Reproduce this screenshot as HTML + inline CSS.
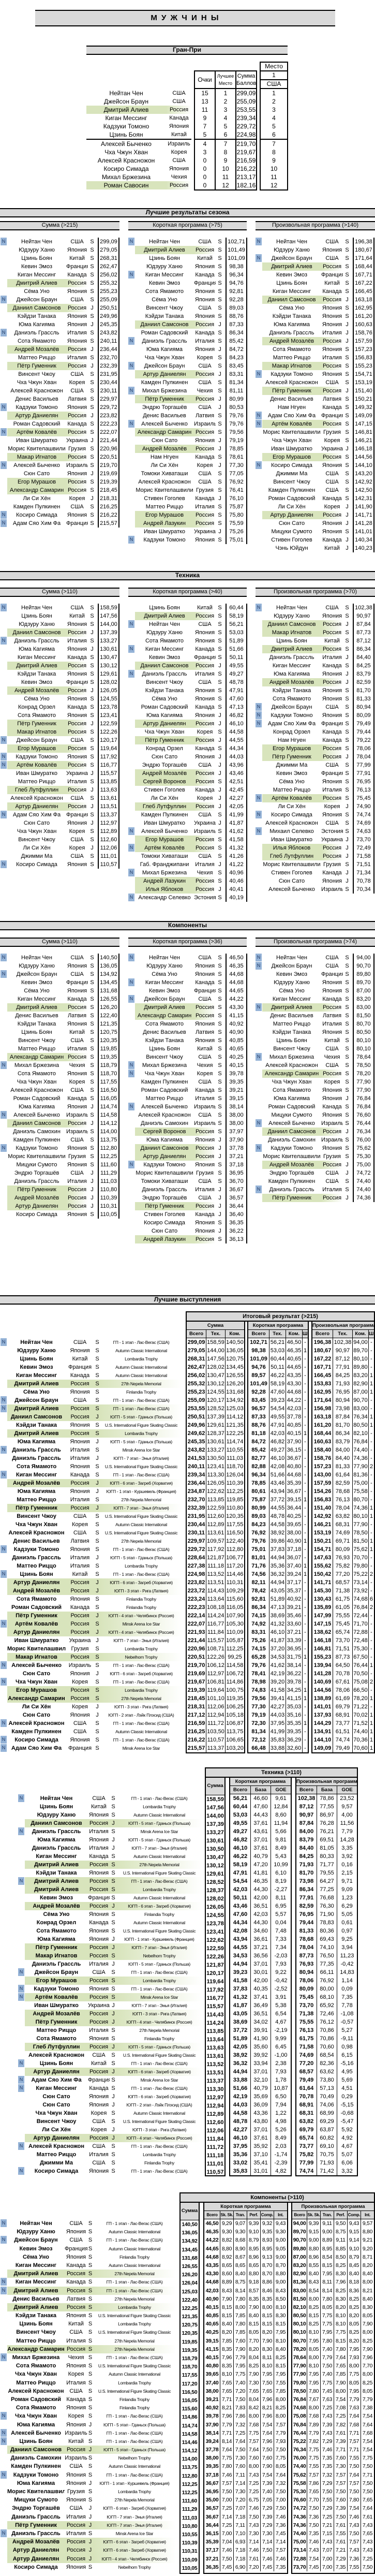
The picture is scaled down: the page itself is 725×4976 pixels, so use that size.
<!DOCTYPE html>
<html lang="ru"><head><meta charset="utf-8"><title>Мужчины</title>
<style>
*{box-sizing:border-box}
body{margin:0;width:725px;height:4976px;position:relative;font-family:"Liberation Sans","Noto Sans CJK SC",sans-serif;font-size:11px;color:#000;background:#fff;overflow:hidden}
p{margin:0}
.bar{position:absolute;background:#d9d9d9;border-top:2px solid #000;border-bottom:2px solid #000;text-align:center;font-size:11px;line-height:13px;white-space:nowrap}
.bar.big{font-size:12px;font-weight:bold}
.L{position:absolute}
.L p{display:flex;height:16px;line-height:16px;white-space:nowrap}
.L i,.L b,.L u,.L s,.L em{display:block;flex:none;font-style:normal;text-decoration:none;text-align:center;overflow:hidden}
.L i{width:12px;height:15px;margin:0 1px;font-size:9px;line-height:15px;color:#1f3864}
.L i:not(:empty){background:#95b3d7}
.L b{font-weight:normal}
.g b,.g s{background:#d8e4bc}
.g u{background:linear-gradient(90deg,#d8e4bc,#d8e4bc 40%,#fff)}
.S b{width:114px}.S u{width:42px}.S s{width:16px}
.S em{width:42px;margin-left:3px;border-left:2px solid #000;border-right:2px solid #000}
.S .g s{background:none}
.S .g u{background:linear-gradient(90deg,#d8e4bc,#fff)}
.P b,.T b,.C b{font-weight:bold}
.P b{width:113px}.P u{width:55px}.P s{width:12px}.P em{width:158px;font-size:8.5px;letter-spacing:-.3px}
.T b{width:122px}.T u{width:42px}.T s{width:14px}.T em{width:164px;font-size:8.5px;letter-spacing:-.3px}
.C b{width:111px}.C u{width:44px}.C s{width:11px}.C em{width:160px;font-size:8.5px;letter-spacing:-.3px}
.P .g u,.T .g u,.C .g u{background:#d8e4bc}
.P .g em,.T .g em,.C .g em{background:linear-gradient(90deg,#d8e4bc,#fff)}
.C p{height:16.2px}
.G{position:absolute;border:2px solid #000;background:#fff}
.G .h{display:flex;height:16px;line-height:15px;background:#d9d9d9;border-bottom:1px solid #000;font-weight:bold;font-size:9.5px;white-space:nowrap}
.G p{display:flex;height:16px;line-height:16px}
.cm p{height:16.2px}
.G c{display:block;flex:none;text-align:center;border-left:1px solid #000;overflow:hidden;white-space:nowrap}
.G c:first-child{border-left:none}
.G p c:first-child{font-weight:bold}
.pa c{width:37px}
.pb c:nth-child(1){width:40px}.pb c:nth-child(2),.pb c:nth-child(3){width:32px}.pb c:nth-child(4){width:11px}
.pc c:nth-child(1){width:39px}.pc c:nth-child(2){width:38px}.pc c:nth-child(3){width:31px}.pc c:nth-child(4){width:11px}
.ta c{width:36px}
.tb c,.tc c{width:39px}
.ca c{width:35px}
.cb c{width:26px}.cb c:first-child{width:30px}
.cc c{width:26px}.cc c:first-child{width:28px}
.cb .h c,.cc .h c{font-size:8px;letter-spacing:-.3px}
.cm p c{font-size:10.5px;letter-spacing:-.3px}
.G .h1 c{width:100%!important;font-size:9.5px!important;letter-spacing:0!important}
.bx{position:absolute;border:2px solid #000;background:#d9d9d9;text-align:center;font-weight:bold;font-size:11px;line-height:16px}
.gp{position:absolute;left:167px}
.gp p{display:flex;height:16px;line-height:16px;font-size:12px}
.gp b{display:block;width:154px;text-align:center;font-weight:normal}
.gp u{display:block;width:50px;text-align:center;text-decoration:none;font-size:11px}
.gp .g b{background:#d8e4bc}
.gp .g u{background:linear-gradient(90deg,#d8e4bc,#fff)}
.box{position:absolute;border:2px solid #000;background:#fff;font-size:12px}
.box .r{display:flex;height:16px;line-height:16px;text-align:center}
.box .r c{display:block;width:38px}
.box .r c+c{width:40px;border-left:2px solid #000}
.sep{height:2px;background:#000}
</style></head><body>

<div class="bar" style="left:68px;top:19px;width:580px;height:32px;font-size:15px;font-weight:bold;letter-spacing:2px;line-height:28px">М У Ж Ч И Н Ы</div>
<div class="bar big" style="left:167px;top:88px;width:389px;height:18px">Гран-При</div>

<div class="gp" style="top:172px">
<p><b>Нейтан Чен</b><u>США</u></p>
<p><b>Джейсон Браун</b><u>США</u></p>
<p class="g"><b>Дмитрий Алиев</b><u>Россия</u></p>
<p><b>Киган Мессинг</b><u>Канада</u></p>
<p><b>Кадзуки Томоно</b><u>Япония</u></p>
<p><b>Цзинь Боян</b><u>Китай</u></p>
</div>
<div style="position:absolute;left:167px;top:268px;width:203px;height:2px;background:#000"></div>
<div class="gp" style="top:270px">
<p><b>Алексей Быченко</b><u>Израиль</u></p>
<p><b>Чха Чжун Хван</b><u>Корея</u></p>
<p><b>Алексей Красножон</b><u>США</u></p>
<p><b>Косиро Симада</b><u>Япония</u></p>
<p><b>Михал Бржезина</b><u>Чехия</u></p>
<p class="g"><b>Роман Савосин</b><u>Россия</u></p>
</div>

<div class="box" style="left:375px;top:136px;width:122px;height:232px">
<div class="r" style="height:34px;border-bottom:2px solid #000;line-height:14px"><c style="line-height:32px">Очки</c><c style="font-size:9px;padding-top:2px">Лучшее<br>Место</c><c style="font-size:11px;padding-top:2px">Сумма<br>Баллов</c></div>
<div class="r"><c>15</c><c>1</c><c>299,09</c></div>
<div class="r"><c>13</c><c>2</c><c>255,09</c></div>
<div class="r"><c>11</c><c>3</c><c>253,55</c></div>
<div class="r"><c>9</c><c>4</c><c>239,34</c></div>
<div class="r"><c>7</c><c>5</c><c>229,72</c></div>
<div class="r"><c>5</c><c>6</c><c>224,98</c></div>
<div class="sep"></div>
<div class="r"><c>4</c><c>7</c><c>219,70</c></div>
<div class="r"><c>3</c><c>8</c><c>219,67</c></div>
<div class="r"><c>0</c><c>9</c><c>216,59</c></div>
<div class="r"><c>0</c><c>10</c><c>216,22</c></div>
<div class="r"><c>0</c><c>11</c><c>213,17</c></div>
<div class="r"><c>0</c><c>12</c><c>182,16</c></div>
</div>

<div class="box" style="left:502px;top:119px;width:55px;height:249px;text-align:center">
<div style="height:17px;border-bottom:2px solid #000;line-height:15px">Место</div>
<div style="height:17px;border-bottom:2px solid #000;line-height:15px">1</div>
<div style="height:17px;border-bottom:2px solid #000;line-height:15px">США</div>
<div style="line-height:16px">1<br>2<br>3<br>4<br>5<br>6</div>
<div class="sep"></div>
<div style="line-height:16px">7<br>8<br>9<br>10<br>11<br>12</div>
</div>

<div class="bar big" style="left:0;top:402px;width:725px;height:18px">Лучшие результаты сезона</div>
<div class="bar" style="left:0;top:427px;width:231px;height:18px">Сумма (&gt;215)</div>
<div class="bar" style="left:248px;top:427px;width:229px;height:18px">Короткая программа (&gt;75)</div>
<div class="bar" style="left:494px;top:427px;width:231px;height:18px">Произвольная программа (&gt;140)</div>

<div class="L S" style="left:0;top:459px">
<p><i>N</i><b>Нейтан Чен</b><u>США</u><s>S</s><em>299,09</em></p>
<p><i></i><b>Юдзуру Ханю</b><u>Япония</u><s>S</s><em>279,05</em></p>
<p><i></i><b>Цзинь Боян</b><u>Китай</u><s>S</s><em>268,31</em></p>
<p><i></i><b>Кевин Эмоз</b><u>Франция</u><s>S</s><em>262,47</em></p>
<p><i></i><b>Киган Мессинг</b><u>Канада</u><s>S</s><em>256,02</em></p>
<p class="g"><i></i><b>Дмитрий Алиев</b><u>Россия</u><s>S</s><em>255,32</em></p>
<p><i></i><b>Сёма Уно</b><u>Япония</u><s>S</s><em>255,23</em></p>
<p><i>N</i><b>Джейсон Браун</b><u>США</u><s>S</s><em>255,09</em></p>
<p class="g"><i></i><b>Даниил Самсонов</b><u>Россия</u><s>J</s><em>250,51</em></p>
<p><i></i><b>Кэйдзи Танака</b><u>Япония</u><s>S</s><em>249,96</em></p>
<p><i></i><b>Юма Кагияма</b><u>Япония</u><s>J</s><em>245,35</em></p>
<p><i>N</i><b>Даниэль Грассль</b><u>Италия</u><s>S</s><em>243,82</em></p>
<p><i></i><b>Сота Ямамото</b><u>Япония</u><s>S</s><em>240,11</em></p>
<p class="g"><i></i><b>Андрей Мозалёв</b><u>Россия</u><s>J</s><em>236,44</em></p>
<p><i></i><b>Маттео Риццо</b><u>Италия</u><s>S</s><em>232,70</em></p>
<p class="g"><i></i><b>Пётр Гуменник</b><u>Россия</u><s>J</s><em>232,39</em></p>
<p><i></i><b>Винсент Чжоу</b><u>США</u><s>S</s><em>231,95</em></p>
<p><i></i><b>Чха Чжун Хван</b><u>Корея</u><s>S</s><em>230,44</em></p>
<p><i></i><b>Алексей Красножон</b><u>США</u><s>S</s><em>230,11</em></p>
<p><i></i><b>Денис Васильев</b><u>Латвия</u><s>S</s><em>229,97</em></p>
<p><i>N</i><b>Кадзуки Томоно</b><u>Япония</u><s>S</s><em>229,72</em></p>
<p class="g"><i></i><b>Артур Даниелян</b><u>Россия</u><s>J</s><em>223,82</em></p>
<p><i></i><b>Роман Садовский</b><u>Канада</u><s>S</s><em>222,23</em></p>
<p class="g"><i>N</i><b>Артём Ковалёв</b><u>Россия</u><s>S</s><em>222,07</em></p>
<p><i></i><b>Иван Шмуратко</b><u>Украина</u><s>J</s><em>221,44</em></p>
<p><i></i><b>Морис Квителашвили</b><u>Грузия</u><s>S</s><em>220,96</em></p>
<p class="g"><i></i><b>Макар Игнатов</b><u>Россия</u><s>S</s><em>220,51</em></p>
<p><i>N</i><b>Алексей Быченко</b><u>Израиль</u><s>S</s><em>219,70</em></p>
<p><i></i><b>Сюн Сато</b><u>Япония</u><s>J</s><em>219,69</em></p>
<p class="g"><i></i><b>Егор Мурашов</b><u>Россия</u><s>S</s><em>219,39</em></p>
<p class="g"><i></i><b>Александр Самарин</b><u>Россия</u><s>S</s><em>218,45</em></p>
<p><i></i><b>Ли Си Хён</b><u>Корея</u><s>J</s><em>218,31</em></p>
<p><i></i><b>Камден Пулкинен</b><u>США</u><s>S</s><em>216,25</em></p>
<p><i>N</i><b>Косиро Симада</b><u>Япония</u><s>S</s><em>216,22</em></p>
<p><i>N</i><b>Адам Сяо Хим Фа</b><u>Франция</u><s>S</s><em>215,57</em></p>
</div>

<div class="L S" style="left:247px;top:459px">
<p><i>N</i><b>Нейтан Чен</b><u>США</u><s>S</s><em>102,71</em></p>
<p class="g"><i></i><b>Дмитрий Алиев</b><u>Россия</u><s>S</s><em>101,49</em></p>
<p><i></i><b>Цзинь Боян</b><u>Китай</u><s>S</s><em>101,09</em></p>
<p><i></i><b>Юдзуру Ханю</b><u>Япония</u><s>S</s><em>98,38</em></p>
<p><i>N</i><b>Киган Мессинг</b><u>Канада</u><s>S</s><em>96,34</em></p>
<p><i></i><b>Кевин Эмоз</b><u>Франция</u><s>S</s><em>94,76</em></p>
<p><i></i><b>Сота Ямамото</b><u>Япония</u><s>S</s><em>92,81</em></p>
<p><i></i><b>Сёма Уно</b><u>Япония</u><s>S</s><em>92,28</em></p>
<p><i></i><b>Винсент Чжоу</b><u>США</u><s>S</s><em>89,03</em></p>
<p><i></i><b>Кэйдзи Танака</b><u>Япония</u><s>S</s><em>88,76</em></p>
<p class="g"><i></i><b>Даниил Самсонов</b><u>Россия</u><s>J</s><em>87,33</em></p>
<p><i></i><b>Роман Садовский</b><u>Канада</u><s>S</s><em>86,34</em></p>
<p><i>N</i><b>Даниэль Грассль</b><u>Италия</u><s>S</s><em>85,42</em></p>
<p><i></i><b>Юма Кагияма</b><u>Япония</u><s>J</s><em>84,72</em></p>
<p><i></i><b>Чха Чжун Хван</b><u>Корея</u><s>S</s><em>84,23</em></p>
<p><i>N</i><b>Джейсон Браун</b><u>США</u><s>S</s><em>83,45</em></p>
<p class="g"><i></i><b>Артур Даниелян</b><u>Россия</u><s>J</s><em>83,31</em></p>
<p><i></i><b>Камден Пулкинен</b><u>США</u><s>S</s><em>81,34</em></p>
<p><i>N</i><b>Михал Бржезина</b><u>Чехия</u><s>S</s><em>81,11</em></p>
<p class="g"><i></i><b>Пётр Гуменник</b><u>Россия</u><s>J</s><em>80,99</em></p>
<p><i></i><b>Эндрю Торгашёв</b><u>США</u><s>J</s><em>80,53</em></p>
<p><i></i><b>Денис Васильев</b><u>Латвия</u><s>S</s><em>79,76</em></p>
<p><i>N</i><b>Алексей Быченко</b><u>Израиль</u><s>S</s><em>79,76</em></p>
<p class="g"><i></i><b>Александр Самарин</b><u>Россия</u><s>S</s><em>79,56</em></p>
<p><i></i><b>Сюн Сато</b><u>Япония</u><s>J</s><em>79,19</em></p>
<p class="g"><i></i><b>Андрей Мозалёв</b><u>Россия</u><s>J</s><em>78,85</em></p>
<p><i></i><b>Нам Нгуен</b><u>Канада</u><s>S</s><em>78,61</em></p>
<p><i></i><b>Ли Си Хён</b><u>Корея</u><s>J</s><em>77,30</em></p>
<p><i></i><b>Томоки Хиваташи</b><u>США</u><s>S</s><em>77,05</em></p>
<p><i></i><b>Алексей Красножон</b><u>США</u><s>S</s><em>76,92</em></p>
<p><i></i><b>Морис Квителашвили</b><u>Грузия</u><s>S</s><em>76,41</em></p>
<p><i></i><b>Стивен Гоголев</b><u>Канада</u><s>J</s><em>76,10</em></p>
<p><i></i><b>Маттео Риццо</b><u>Италия</u><s>S</s><em>75,87</em></p>
<p class="g"><i></i><b>Егор Мурашов</b><u>Россия</u><s>S</s><em>75,80</em></p>
<p class="g"><i></i><b>Андрей Лазукин</b><u>Россия</u><s>S</s><em>75,59</em></p>
<p><i></i><b>Иван Шмуратко</b><u>Украина</u><s>J</s><em>75,26</em></p>
<p><i>N</i><b>Кадзуки Томоно</b><u>Япония</u><s>S</s><em>75,01</em></p>
</div>

<div class="L S" style="left:493px;top:459px">
<p><i>N</i><b>Нейтан Чен</b><u>США</u><s>S</s><em>196,38</em></p>
<p><i></i><b>Юдзуру Ханю</b><u>Япония</u><s>S</s><em>180,67</em></p>
<p><i>N</i><b>Джейсон Браун</b><u>США</u><s>S</s><em>171,64</em></p>
<p class="g"><i></i><b>Дмитрий Алиев</b><u>Россия</u><s>S</s><em>168,44</em></p>
<p><i></i><b>Кевин Эмоз</b><u>Франция</u><s>S</s><em>167,71</em></p>
<p><i></i><b>Цзинь Боян</b><u>Китай</u><s>S</s><em>167,22</em></p>
<p><i></i><b>Киган Мессинг</b><u>Канада</u><s>S</s><em>166,45</em></p>
<p class="g"><i></i><b>Даниил Самсонов</b><u>Россия</u><s>J</s><em>163,18</em></p>
<p><i></i><b>Сёма Уно</b><u>Япония</u><s>S</s><em>162,95</em></p>
<p><i></i><b>Кэйдзи Танака</b><u>Япония</u><s>S</s><em>161,20</em></p>
<p><i></i><b>Юма Кагияма</b><u>Япония</u><s>J</s><em>160,63</em></p>
<p><i></i><b>Даниэль Грассль</b><u>Италия</u><s>J</s><em>158,76</em></p>
<p class="g"><i></i><b>Андрей Мозалёв</b><u>Россия</u><s>J</s><em>157,59</em></p>
<p><i></i><b>Сота Ямамото</b><u>Япония</u><s>S</s><em>157,23</em></p>
<p><i></i><b>Маттео Риццо</b><u>Италия</u><s>S</s><em>156,83</em></p>
<p class="g"><i></i><b>Макар Игнатов</b><u>Россия</u><s>S</s><em>155,23</em></p>
<p><i>N</i><b>Кадзуки Томоно</b><u>Япония</u><s>S</s><em>154,71</em></p>
<p><i></i><b>Алексей Красножон</b><u>США</u><s>S</s><em>153,19</em></p>
<p class="g"><i></i><b>Пётр Гуменник</b><u>Россия</u><s>J</s><em>151,40</em></p>
<p><i></i><b>Денис Васильев</b><u>Латвия</u><s>S</s><em>150,21</em></p>
<p><i></i><b>Нам Нгуен</b><u>Канада</u><s>S</s><em>149,32</em></p>
<p><i>N</i><b>Адам Сяо Хим Фа</b><u>Франция</u><s>S</s><em>149,09</em></p>
<p class="g"><i>N</i><b>Артём Ковалёв</b><u>Россия</u><s>S</s><em>147,15</em></p>
<p><i></i><b>Морис Квителашвили</b><u>Грузия</u><s>S</s><em>146,81</em></p>
<p><i></i><b>Чха Чжун Хван</b><u>Корея</u><s>S</s><em>146,21</em></p>
<p><i></i><b>Иван Шмуратко</b><u>Украина</u><s>J</s><em>146,18</em></p>
<p class="g"><i></i><b>Егор Мурашов</b><u>Россия</u><s>S</s><em>144,56</em></p>
<p><i>N</i><b>Косиро Симада</b><u>Япония</u><s>S</s><em>144,10</em></p>
<p><i></i><b>Джимми Ма</b><u>США</u><s>S</s><em>143,20</em></p>
<p><i></i><b>Винсент Чжоу</b><u>США</u><s>S</s><em>142,92</em></p>
<p><i></i><b>Камден Пулкинен</b><u>США</u><s>S</s><em>142,50</em></p>
<p><i></i><b>Роман Садовский</b><u>Канада</u><s>S</s><em>142,31</em></p>
<p><i></i><b>Ли Си Хён</b><u>Корея</u><s>J</s><em>141,90</em></p>
<p class="g"><i></i><b>Артур Даниелян</b><u>Россия</u><s>J</s><em>141,71</em></p>
<p><i></i><b>Сюн Сато</b><u>Япония</u><s>J</s><em>141,28</em></p>
<p><i></i><b>Мицуки Сумото</b><u>Япония</u><s>S</s><em>141,01</em></p>
<p><i></i><b>Стивен Гоголев</b><u>Канада</u><s>J</s><em>140,34</em></p>
<p><i></i><b>Чэнь Юйдун</b><u>Китай</u><s>J</s><em>140,23</em></p>
</div>

<div class="bar big" style="left:0;top:1103px;width:725px;height:18px">Техника</div>
<div class="bar" style="left:0;top:1135px;width:231px;height:18px">Сумма (&gt;110)</div>
<div class="bar" style="left:248px;top:1135px;width:229px;height:18px">Короткая программа (&gt;40)</div>
<div class="bar" style="left:494px;top:1135px;width:231px;height:18px">Произвольная программа (&gt;70)</div>

<div class="L S" style="left:0;top:1166px">
<p><i>N</i><b>Нейтан Чен</b><u>США</u><s>S</s><em>158,59</em></p>
<p><i></i><b>Цзинь Боян</b><u>Китай</u><s>S</s><em>147,56</em></p>
<p><i></i><b>Юдзуру Ханю</b><u>Япония</u><s>S</s><em>144,00</em></p>
<p class="g"><i></i><b>Даниил Самсонов</b><u>Россия</u><s>J</s><em>137,39</em></p>
<p><i>N</i><b>Даниэль Грассль</b><u>Италия</u><s>S</s><em>133,27</em></p>
<p><i></i><b>Юма Кагияма</b><u>Япония</u><s>J</s><em>130,61</em></p>
<p><i></i><b>Киган Мессинг</b><u>Канада</u><s>S</s><em>130,47</em></p>
<p class="g"><i></i><b>Дмитрий Алиев</b><u>Россия</u><s>S</s><em>130,12</em></p>
<p><i></i><b>Кэйдзи Танака</b><u>Япония</u><s>S</s><em>129,61</em></p>
<p><i></i><b>Кевин Эмоз</b><u>Франция</u><s>S</s><em>128,02</em></p>
<p class="g"><i></i><b>Андрей Мозалёв</b><u>Россия</u><s>J</s><em>126,05</em></p>
<p><i></i><b>Сёма Уно</b><u>Япония</u><s>S</s><em>124,55</em></p>
<p><i></i><b>Конрад Орзел</b><u>Канада</u><s>S</s><em>123,78</em></p>
<p><i></i><b>Сота Ямамото</b><u>Япония</u><s>S</s><em>123,41</em></p>
<p class="g"><i></i><b>Пётр Гуменник</b><u>Россия</u><s>J</s><em>122,59</em></p>
<p class="g"><i></i><b>Макар Игнатов</b><u>Россия</u><s>S</s><em>122,26</em></p>
<p><i>N</i><b>Джейсон Браун</b><u>США</u><s>S</s><em>120,17</em></p>
<p class="g"><i></i><b>Егор Мурашов</b><u>Россия</u><s>S</s><em>119,64</em></p>
<p><i>N</i><b>Кадзуки Томоно</b><u>Япония</u><s>S</s><em>117,92</em></p>
<p class="g"><i>N</i><b>Артём Ковалёв</b><u>Россия</u><s>S</s><em>116,77</em></p>
<p><i></i><b>Иван Шмуратко</b><u>Украина</u><s>J</s><em>115,57</em></p>
<p><i></i><b>Маттео Риццо</b><u>Италия</u><s>S</s><em>113,85</em></p>
<p class="g"><i></i><b>Глеб Лутфуллин</b><u>Россия</u><s>J</s><em>113,63</em></p>
<p><i></i><b>Алексей Красножон</b><u>США</u><s>S</s><em>113,61</em></p>
<p class="g"><i></i><b>Артур Даниелян</b><u>Россия</u><s>J</s><em>113,51</em></p>
<p><i>N</i><b>Адам Сяо Хим Фа</b><u>Франция</u><s>S</s><em>113,37</em></p>
<p><i></i><b>Сюн Сато</b><u>Япония</u><s>J</s><em>112,97</em></p>
<p><i></i><b>Чха Чжун Хван</b><u>Корея</u><s>S</s><em>112,89</em></p>
<p><i></i><b>Винсент Чжоу</b><u>США</u><s>S</s><em>112,60</em></p>
<p><i></i><b>Ли Си Хён</b><u>Корея</u><s>J</s><em>112,06</em></p>
<p><i></i><b>Джимми Ма</b><u>США</u><s>S</s><em>111,01</em></p>
<p><i>N</i><b>Косиро Симада</b><u>Япония</u><s>S</s><em>110,57</em></p>
</div>

<div class="L S" style="left:247px;top:1166px">
<p><i></i><b>Цзинь Боян</b><u>Китай</u><s>S</s><em>60,44</em></p>
<p class="g"><i></i><b>Дмитрий Алиев</b><u>Россия</u><s>S</s><em>58,19</em></p>
<p><i>N</i><b>Нейтан Чен</b><u>США</u><s>S</s><em>56,21</em></p>
<p><i></i><b>Юдзуру Ханю</b><u>Япония</u><s>S</s><em>53,03</em></p>
<p><i></i><b>Сота Ямамото</b><u>Япония</u><s>S</s><em>51,89</em></p>
<p><i>N</i><b>Киган Мессинг</b><u>Канада</u><s>S</s><em>51,66</em></p>
<p><i></i><b>Кевин Эмоз</b><u>Франция</u><s>S</s><em>50,11</em></p>
<p class="g"><i></i><b>Даниил Самсонов</b><u>Россия</u><s>J</s><em>49,55</em></p>
<p><i>N</i><b>Даниэль Грассль</b><u>Италия</u><s>S</s><em>49,27</em></p>
<p><i></i><b>Винсент Чжоу</b><u>США</u><s>S</s><em>48,78</em></p>
<p><i></i><b>Кэйдзи Танака</b><u>Япония</u><s>S</s><em>47,91</em></p>
<p><i></i><b>Сёма Уно</b><u>Япония</u><s>S</s><em>47,60</em></p>
<p><i></i><b>Роман Садовский</b><u>Канада</u><s>S</s><em>47,13</em></p>
<p><i></i><b>Юма Кагияма</b><u>Япония</u><s>J</s><em>46,82</em></p>
<p class="g"><i></i><b>Артур Даниелян</b><u>Россия</u><s>J</s><em>46,10</em></p>
<p><i></i><b>Чха Чжун Хван</b><u>Корея</u><s>S</s><em>44,58</em></p>
<p class="g"><i></i><b>Пётр Гуменник</b><u>Россия</u><s>J</s><em>44,55</em></p>
<p><i></i><b>Конрад Орзел</b><u>Канада</u><s>S</s><em>44,34</em></p>
<p><i></i><b>Сюн Сато</b><u>Япония</u><s>J</s><em>44,03</em></p>
<p><i></i><b>Эндрю Торгашёв</b><u>США</u><s>J</s><em>43,96</em></p>
<p class="g"><i></i><b>Андрей Мозалёв</b><u>Россия</u><s>J</s><em>43,46</em></p>
<p class="g"><i></i><b>Сергей Воронов</b><u>Россия</u><s>S</s><em>42,51</em></p>
<p><i></i><b>Стивен Гоголев</b><u>Канада</u><s>J</s><em>42,45</em></p>
<p><i></i><b>Ли Си Хён</b><u>Корея</u><s>J</s><em>42,27</em></p>
<p class="g"><i></i><b>Глеб Лутфуллин</b><u>Россия</u><s>J</s><em>42,05</em></p>
<p><i></i><b>Камден Пулкинен</b><u>США</u><s>S</s><em>41,99</em></p>
<p><i></i><b>Иван Шмуратко</b><u>Украина</u><s>J</s><em>41,87</em></p>
<p><i>N</i><b>Алексей Быченко</b><u>Израиль</u><s>S</s><em>41,62</em></p>
<p class="g"><i></i><b>Егор Мурашов</b><u>Россия</u><s>S</s><em>41,58</em></p>
<p class="g"><i>N</i><b>Артём Ковалёв</b><u>Россия</u><s>S</s><em>41,32</em></p>
<p><i></i><b>Томоки Хиваташи</b><u>США</u><s>S</s><em>41,26</em></p>
<p><i></i><b>Габ. Франджипани</b><u>Италия</u><s>J</s><em>41,22</em></p>
<p><i>N</i><b>Михал Бржезина</b><u>Чехия</u><s>S</s><em>40,96</em></p>
<p class="g"><i></i><b>Андрей Лазукин</b><u>Россия</u><s>S</s><em>40,46</em></p>
<p class="g"><i></i><b>Илья Яблоков</b><u>Россия</u><s>J</s><em>40,41</em></p>
<p><i>N</i><b>Александр Селевко</b><u>Эстония</u><s>S</s><em>40,19</em></p>
</div>

<div class="L S" style="left:493px;top:1166px">
<p><i>N</i><b>Нейтан Чен</b><u>США</u><s>S</s><em>102,38</em></p>
<p><i></i><b>Юдзуру Ханю</b><u>Япония</u><s>S</s><em>90,97</em></p>
<p class="g"><i></i><b>Даниил Самсонов</b><u>Россия</u><s>J</s><em>87,84</em></p>
<p class="g"><i></i><b>Макар Игнатов</b><u>Россия</u><s>S</s><em>87,73</em></p>
<p><i></i><b>Цзинь Боян</b><u>Китай</u><s>S</s><em>87,12</em></p>
<p class="g"><i></i><b>Дмитрий Алиев</b><u>Россия</u><s>S</s><em>86,34</em></p>
<p><i></i><b>Даниэль Грассль</b><u>Италия</u><s>J</s><em>84,40</em></p>
<p><i></i><b>Киган Мессинг</b><u>Канада</u><s>S</s><em>84,25</em></p>
<p><i></i><b>Юма Кагияма</b><u>Япония</u><s>J</s><em>83,79</em></p>
<p class="g"><i></i><b>Андрей Мозалёв</b><u>Россия</u><s>J</s><em>82,59</em></p>
<p><i></i><b>Кэйдзи Танака</b><u>Япония</u><s>S</s><em>81,70</em></p>
<p><i></i><b>Сота Ямамото</b><u>Япония</u><s>S</s><em>81,33</em></p>
<p><i>N</i><b>Джейсон Браун</b><u>США</u><s>S</s><em>80,94</em></p>
<p><i>N</i><b>Кадзуки Томоно</b><u>Япония</u><s>S</s><em>80,09</em></p>
<p><i>N</i><b>Адам Сяо Хим Фа</b><u>Франция</u><s>S</s><em>79,49</em></p>
<p><i></i><b>Конрад Орзел</b><u>Канада</u><s>S</s><em>79,44</em></p>
<p><i></i><b>Нам Нгуен</b><u>Канада</u><s>S</s><em>79,22</em></p>
<p class="g"><i></i><b>Егор Мурашов</b><u>Россия</u><s>S</s><em>78,06</em></p>
<p class="g"><i></i><b>Пётр Гуменник</b><u>Россия</u><s>J</s><em>78,04</em></p>
<p><i></i><b>Джимми Ма</b><u>США</u><s>S</s><em>77,99</em></p>
<p><i></i><b>Кевин Эмоз</b><u>Франция</u><s>S</s><em>77,91</em></p>
<p><i></i><b>Сёма Уно</b><u>Япония</u><s>S</s><em>76,95</em></p>
<p><i></i><b>Маттео Риццо</b><u>Италия</u><s>S</s><em>76,13</em></p>
<p class="g"><i>N</i><b>Артём Ковалёв</b><u>Россия</u><s>S</s><em>75,45</em></p>
<p><i></i><b>Ли Си Хён</b><u>Корея</u><s>J</s><em>74,90</em></p>
<p><i>N</i><b>Косиро Симада</b><u>Япония</u><s>S</s><em>74,74</em></p>
<p><i></i><b>Алексей Красножон</b><u>США</u><s>S</s><em>74,69</em></p>
<p><i>N</i><b>Михаил Селевко</b><u>Эстония</u><s>S</s><em>74,63</em></p>
<p><i></i><b>Иван Шмуратко</b><u>Украина</u><s>J</s><em>73,70</em></p>
<p class="g"><i></i><b>Илья Яблоков</b><u>Россия</u><s>J</s><em>72,49</em></p>
<p class="g"><i></i><b>Глеб Лутфуллин</b><u>Россия</u><s>J</s><em>71,58</em></p>
<p><i></i><b>Морис Квителашвили</b><u>Грузия</u><s>S</s><em>71,51</em></p>
<p><i></i><b>Стивен Гоголев</b><u>Канада</u><s>J</s><em>71,34</em></p>
<p><i></i><b>Сюн Сато</b><u>Япония</u><s>J</s><em>70,78</em></p>
<p><i></i><b>Алексей Быченко</b><u>Израиль</u><s>S</s><em>70,34</em></p>
</div>

<div class="bar big" style="left:0;top:1779px;width:725px;height:18px">Компоненты</div>
<div class="bar" style="left:0;top:1811px;width:231px;height:18px">Сумма (&gt;110)</div>
<div class="bar" style="left:248px;top:1811px;width:229px;height:18px">Короткая программа (&gt;36)</div>
<div class="bar" style="left:494px;top:1811px;width:231px;height:18px">Произвольная программа (&gt;74)</div>

<div class="L S" style="left:0;top:1842px">
<p><i>N</i><b>Нейтан Чен</b><u>США</u><s>S</s><em>140,50</em></p>
<p><i></i><b>Юдзуру Ханю</b><u>Япония</u><s>S</s><em>136,05</em></p>
<p><i>N</i><b>Джейсон Браун</b><u>США</u><s>S</s><em>134,92</em></p>
<p><i></i><b>Кевин Эмоз</b><u>Франция</u><s>S</s><em>134,45</em></p>
<p><i></i><b>Сёма Уно</b><u>Япония</u><s>S</s><em>131,68</em></p>
<p><i></i><b>Киган Мессинг</b><u>Канада</u><s>S</s><em>126,55</em></p>
<p class="g"><i></i><b>Дмитрий Алиев</b><u>Россия</u><s>S</s><em>126,20</em></p>
<p><i></i><b>Денис Васильев</b><u>Латвия</u><s>S</s><em>122,40</em></p>
<p><i></i><b>Кэйдзи Танака</b><u>Япония</u><s>S</s><em>121,35</em></p>
<p><i></i><b>Цзинь Боян</b><u>Китай</u><s>S</s><em>120,75</em></p>
<p><i></i><b>Винсент Чжоу</b><u>США</u><s>S</s><em>120,35</em></p>
<p><i></i><b>Маттео Риццо</b><u>Италия</u><s>S</s><em>119,85</em></p>
<p class="g"><i></i><b>Александр Самарин</b><u>Россия</u><s>S</s><em>119,35</em></p>
<p><i>N</i><b>Михал Бржезина</b><u>Чехия</u><s>S</s><em>118,79</em></p>
<p><i></i><b>Сота Ямамото</b><u>Япония</u><s>S</s><em>118,70</em></p>
<p><i></i><b>Чха Чжун Хван</b><u>Корея</u><s>S</s><em>117,55</em></p>
<p><i></i><b>Алексей Красножон</b><u>США</u><s>S</s><em>116,50</em></p>
<p><i></i><b>Роман Садовский</b><u>Канада</u><s>S</s><em>116,05</em></p>
<p><i></i><b>Юма Кагияма</b><u>Япония</u><s>J</s><em>114,74</em></p>
<p><i>N</i><b>Алексей Быченко</b><u>Израиль</u><s>S</s><em>114,58</em></p>
<p class="g"><i></i><b>Даниил Самсонов</b><u>Россия</u><s>J</s><em>114,12</em></p>
<p><i></i><b>Даниэль Самохин</b><u>Израиль</u><s>S</s><em>114,00</em></p>
<p><i></i><b>Камден Пулкинен</b><u>США</u><s>S</s><em>113,75</em></p>
<p><i>N</i><b>Кадзуки Томоно</b><u>Япония</u><s>S</s><em>112,80</em></p>
<p><i></i><b>Морис Квителашвили</b><u>Грузия</u><s>S</s><em>112,25</em></p>
<p><i></i><b>Мицуки Сумото</b><u>Япония</u><s>S</s><em>111,60</em></p>
<p><i></i><b>Эндрю Торгашёв</b><u>США</u><s>J</s><em>111,29</em></p>
<p><i></i><b>Даниэль Грассль</b><u>Италия</u><s>J</s><em>111,03</em></p>
<p class="g"><i></i><b>Пётр Гуменник</b><u>Россия</u><s>J</s><em>110,80</em></p>
<p class="g"><i></i><b>Андрей Мозалёв</b><u>Россия</u><s>J</s><em>110,39</em></p>
<p class="g"><i></i><b>Артур Даниелян</b><u>Россия</u><s>J</s><em>110,31</em></p>
<p><i></i><b>Косиро Симада</b><u>Япония</u><s>S</s><em>110,05</em></p>
</div>

<div class="L S" style="left:247px;top:1842px">
<p><i>N</i><b>Нейтан Чен</b><u>США</u><s>S</s><em>46,50</em></p>
<p><i></i><b>Юдзуру Ханю</b><u>Япония</u><s>S</s><em>46,35</em></p>
<p><i></i><b>Сёма Уно</b><u>Япония</u><s>S</s><em>44,68</em></p>
<p><i>N</i><b>Киган Мессинг</b><u>Канада</u><s>S</s><em>44,68</em></p>
<p><i></i><b>Кевин Эмоз</b><u>Франция</u><s>S</s><em>44,65</em></p>
<p><i>N</i><b>Джейсон Браун</b><u>США</u><s>S</s><em>44,22</em></p>
<p class="g"><i></i><b>Дмитрий Алиев</b><u>Россия</u><s>S</s><em>43,30</em></p>
<p class="g"><i></i><b>Александр Самарин</b><u>Россия</u><s>S</s><em>41,15</em></p>
<p><i></i><b>Сота Ямамото</b><u>Япония</u><s>S</s><em>40,92</em></p>
<p><i></i><b>Денис Васильев</b><u>Латвия</u><s>S</s><em>40,90</em></p>
<p><i></i><b>Кэйдзи Танака</b><u>Япония</u><s>S</s><em>40,85</em></p>
<p><i></i><b>Цзинь Боян</b><u>Китай</u><s>S</s><em>40,65</em></p>
<p><i></i><b>Винсент Чжоу</b><u>США</u><s>S</s><em>40,25</em></p>
<p><i>N</i><b>Михал Бржезина</b><u>Чехия</u><s>S</s><em>40,15</em></p>
<p><i>N</i><b>Чха Чжун Хван</b><u>Корея</u><s>S</s><em>39,78</em></p>
<p><i></i><b>Камден Пулкинен</b><u>США</u><s>S</s><em>39,35</em></p>
<p><i></i><b>Роман Садовский</b><u>Канада</u><s>S</s><em>39,21</em></p>
<p><i></i><b>Маттео Риццо</b><u>Италия</u><s>S</s><em>39,15</em></p>
<p><i>N</i><b>Алексей Быченко</b><u>Израиль</u><s>S</s><em>38,14</em></p>
<p><i></i><b>Алексей Красножон</b><u>США</u><s>S</s><em>38,00</em></p>
<p><i></i><b>Даниэль Самохин</b><u>Израиль</u><s>S</s><em>38,00</em></p>
<p class="g"><i></i><b>Сергей Воронов</b><u>Россия</u><s>S</s><em>37,97</em></p>
<p><i></i><b>Юма Кагияма</b><u>Япония</u><s>J</s><em>37,90</em></p>
<p class="g"><i></i><b>Даниил Самсонов</b><u>Россия</u><s>J</s><em>37,78</em></p>
<p class="g"><i></i><b>Артур Даниелян</b><u>Россия</u><s>J</s><em>37,21</em></p>
<p><i>N</i><b>Кадзуки Томоно</b><u>Япония</u><s>S</s><em>37,18</em></p>
<p><i></i><b>Морис Квителашвили</b><u>Грузия</u><s>S</s><em>36,95</em></p>
<p><i></i><b>Томоки Хиваташи</b><u>США</u><s>S</s><em>36,70</em></p>
<p><i></i><b>Даниэль Грассль</b><u>Италия</u><s>J</s><em>36,67</em></p>
<p><i></i><b>Эндрю Торгашёв</b><u>США</u><s>J</s><em>36,57</em></p>
<p class="g"><i></i><b>Пётр Гуменник</b><u>Россия</u><s>J</s><em>36,44</em></p>
<p><i></i><b>Стивен Гоголев</b><u>Канада</u><s>J</s><em>36,40</em></p>
<p><i></i><b>Косиро Симада</b><u>Япония</u><s>S</s><em>36,35</em></p>
<p><i></i><b>Сюн Сато</b><u>Япония</u><s>J</s><em>36,22</em></p>
<p class="g"><i></i><b>Андрей Лазукин</b><u>Россия</u><s>S</s><em>36,13</em></p>
</div>

<div class="L S" style="left:493px;top:1842px">
<p><i>N</i><b>Нейтан Чен</b><u>США</u><s>S</s><em>94,00</em></p>
<p><i>N</i><b>Джейсон Браун</b><u>США</u><s>S</s><em>90,70</em></p>
<p><i></i><b>Кевин Эмоз</b><u>Франция</u><s>S</s><em>89,80</em></p>
<p><i></i><b>Юдзуру Ханю</b><u>Япония</u><s>S</s><em>89,70</em></p>
<p><i></i><b>Сёма Уно</b><u>Япония</u><s>S</s><em>87,00</em></p>
<p><i></i><b>Киган Мессинг</b><u>Канада</u><s>S</s><em>83,20</em></p>
<p class="g"><i>N</i><b>Дмитрий Алиев</b><u>Россия</u><s>S</s><em>83,00</em></p>
<p><i></i><b>Денис Васильев</b><u>Латвия</u><s>S</s><em>81,50</em></p>
<p><i></i><b>Маттео Риццо</b><u>Италия</u><s>S</s><em>80,70</em></p>
<p><i></i><b>Кэйдзи Танака</b><u>Япония</u><s>S</s><em>80,50</em></p>
<p><i></i><b>Цзинь Боян</b><u>Китай</u><s>S</s><em>80,10</em></p>
<p><i></i><b>Винсент Чжоу</b><u>США</u><s>S</s><em>80,10</em></p>
<p><i>N</i><b>Михал Бржезина</b><u>Чехия</u><s>S</s><em>78,64</em></p>
<p><i></i><b>Алексей Красножон</b><u>США</u><s>S</s><em>78,50</em></p>
<p class="g"><i></i><b>Александр Самарин</b><u>Россия</u><s>S</s><em>78,20</em></p>
<p><i></i><b>Чха Чжун Хван</b><u>Корея</u><s>S</s><em>77,90</em></p>
<p><i></i><b>Сота Ямамото</b><u>Япония</u><s>S</s><em>77,90</em></p>
<p><i></i><b>Юма Кагияма</b><u>Япония</u><s>J</s><em>76,84</em></p>
<p><i></i><b>Роман Садовский</b><u>Канада</u><s>S</s><em>76,84</em></p>
<p><i></i><b>Мицуки Сумото</b><u>Япония</u><s>S</s><em>76,60</em></p>
<p><i>N</i><b>Алексей Быченко</b><u>Израиль</u><s>S</s><em>76,44</em></p>
<p class="g"><i></i><b>Даниил Самсонов</b><u>Россия</u><s>J</s><em>76,34</em></p>
<p><i></i><b>Даниэль Самохин</b><u>Израиль</u><s>S</s><em>76,00</em></p>
<p><i>N</i><b>Кадзуки Томоно</b><u>Япония</u><s>S</s><em>75,62</em></p>
<p><i></i><b>Морис Квителашвили</b><u>Грузия</u><s>S</s><em>75,30</em></p>
<p class="g"><i></i><b>Андрей Мозалёв</b><u>Россия</u><s>J</s><em>75,00</em></p>
<p><i></i><b>Эндрю Торгашёв</b><u>США</u><s>J</s><em>74,72</em></p>
<p><i></i><b>Камден Пулкинен</b><u>США</u><s>S</s><em>74,40</em></p>
<p><i>N</i><b>Даниэль Грассль</b><u>Италия</u><s>S</s><em>74,40</em></p>
<p class="g"><i></i><b>Пётр Гуменник</b><u>Россия</u><s>J</s><em>74,36</em></p>
</div>

<div class="bar big" style="left:0;top:2502px;width:725px;height:18px">Лучшие выступления</div>
<div class="bx" style="left:359px;top:2533px;width:366px;height:20px">Итоговый результат (&gt;215)</div>

<div class="L P" style="left:0;top:2585px">
<p><i>N</i><b>Нейтан Чен</b><u>США</u><s>S</s><em>ГП - 1 этап - Лас-Вегас (США)</em></p>
<p><i></i><b>Юдзуру Ханю</b><u>Япония</u><s>S</s><em>Autumn Classic International</em></p>
<p><i></i><b>Цзинь Боян</b><u>Китай</u><s>S</s><em>Lombardia Trophy</em></p>
<p><i></i><b>Кевин Эмоз</b><u>Франция</u><s>S</s><em>Autumn Classic International</em></p>
<p><i></i><b>Киган Мессинг</b><u>Канада</u><s>S</s><em>Autumn Classic International</em></p>
<p class="g"><i></i><b>Дмитрий Алиев</b><u>Россия</u><s>S</s><em>27th Nepela Memorial</em></p>
<p><i></i><b>Сёма Уно</b><u>Япония</u><s>S</s><em>Finlandia Trophy</em></p>
<p><i>N</i><b>Джейсон Браун</b><u>США</u><s>S</s><em>ГП - 1 этап - Лас-Вегас (США)</em></p>
<p class="g"><i>N</i><b>Дмитрий Алиев</b><u>Россия</u><s>S</s><em>ГП - 1 этап - Лас-Вегас (США)</em></p>
<p class="g"><i></i><b>Даниил Самсонов</b><u>Россия</u><s>J</s><em>ЮГП - 5 этап - Гданьск (Польша)</em></p>
<p><i></i><b>Кэйдзи Танака</b><u>Япония</u><s>S</s><em>U.S. International Figure Skating Classic</em></p>
<p class="g"><i></i><b>Дмитрий Алиев</b><u>Россия</u><s>S</s><em>Lombardia Trophy</em></p>
<p><i></i><b>Юма Кагияма</b><u>Япония</u><s>J</s><em>ЮГП - 5 этап - Гданьск (Польша)</em></p>
<p><i>N</i><b>Даниэль Грассль</b><u>Италия</u><s>S</s><em>Minsk Arena Ice Star</em></p>
<p><i></i><b>Даниэль Грассль</b><u>Италия</u><s>J</s><em>ЮГП - 7 этап - Энья (Италия)</em></p>
<p><i></i><b>Сота Ямамото</b><u>Япония</u><s>S</s><em>U.S. International Figure Skating Classic</em></p>
<p><i>N</i><b>Киган Мессинг</b><u>Канада</u><s>S</s><em>ГП - 1 этап - Лас-Вегас (США)</em></p>
<p class="g"><i></i><b>Андрей Мозалёв</b><u>Россия</u><s>J</s><em>ЮГП - 6 этап - Загреб (Хорватия)</em></p>
<p><i></i><b>Юма Кагияма</b><u>Япония</u><s>J</s><em>ЮГП - 1 этап - Куршевель (Франция)</em></p>
<p><i></i><b>Маттео Риццо</b><u>Италия</u><s>S</s><em>27th Nepela Memorial</em></p>
<p class="g"><i></i><b>Пётр Гуменник</b><u>Россия</u><s>J</s><em>ЮГП - 7 этап - Энья (Италия)</em></p>
<p><i></i><b>Винсент Чжоу</b><u>США</u><s>S</s><em>U.S. International Figure Skating Classic</em></p>
<p><i></i><b>Чха Чжун Хван</b><u>Корея</u><s>S</s><em>Autumn Classic International</em></p>
<p><i></i><b>Алексей Красножон</b><u>США</u><s>S</s><em>U.S. International Figure Skating Classic</em></p>
<p><i></i><b>Денис Васильев</b><u>Латвия</u><s>S</s><em>27th Nepela Memorial</em></p>
<p><i>N</i><b>Кадзуки Томоно</b><u>Япония</u><s>S</s><em>ГП - 1 этап - Лас-Вегас (США)</em></p>
<p><i></i><b>Даниэль Грассль</b><u>Италия</u><s>J</s><em>ЮГП - 5 этап - Гданьск (Польша)</em></p>
<p><i></i><b>Маттео Риццо</b><u>Италия</u><s>S</s><em>Lombardia Trophy</em></p>
<p><i>N</i><b>Цзинь Боян</b><u>Китай</u><s>S</s><em>ГП - 1 этап - Лас-Вегас (США)</em></p>
<p class="g"><i></i><b>Артур Даниелян</b><u>Россия</u><s>J</s><em>ЮГП - 6 этап - Загреб (Хорватия)</em></p>
<p class="g"><i></i><b>Андрей Мозалёв</b><u>Россия</u><s>J</s><em>ЮГП - 3 этап - Рига (Латвия)</em></p>
<p><i></i><b>Сота Ямамото</b><u>Япония</u><s>S</s><em>Finlandia Trophy</em></p>
<p><i></i><b>Роман Садовский</b><u>Канада</u><s>S</s><em>Finlandia Trophy</em></p>
<p class="g"><i></i><b>Пётр Гуменник</b><u>Россия</u><s>J</s><em>ЮГП - 4 этап - Челябинск (Россия)</em></p>
<p class="g"><i>N</i><b>Артём Ковалёв</b><u>Россия</u><s>S</s><em>Minsk Arena Ice Star</em></p>
<p class="g"><i></i><b>Артур Даниелян</b><u>Россия</u><s>J</s><em>ЮГП - 4 этап - Челябинск (Россия)</em></p>
<p><i></i><b>Иван Шмуратко</b><u>Украина</u><s>J</s><em>ЮГП - 7 этап - Энья (Италия)</em></p>
<p><i></i><b>Морис Квителашвили</b><u>Грузия</u><s>S</s><em>Lombardia Trophy</em></p>
<p class="g"><i></i><b>Макар Игнатов</b><u>Россия</u><s>S</s><em>Nebelhorn Trophy</em></p>
<p><i>N</i><b>Алексей Быченко</b><u>Израиль</u><s>S</s><em>ГП - 1 этап - Лас-Вегас (США)</em></p>
<p><i></i><b>Сюн Сато</b><u>Япония</u><s>J</s><em>ЮГП - 6 этап - Загреб (Хорватия)</em></p>
<p><i>N</i><b>Чха Чжун Хван</b><u>Корея</u><s>S</s><em>ГП - 1 этап - Лас-Вегас (США)</em></p>
<p class="g"><i></i><b>Егор Мурашов</b><u>Россия</u><s>S</s><em>Lombardia Trophy</em></p>
<p class="g"><i></i><b>Александр Самарин</b><u>Россия</u><s>S</s><em>27th Nepela Memorial</em></p>
<p><i></i><b>Ли Си Хён</b><u>Корея</u><s>J</s><em>ЮГП - 3 этап - Рига (Латвия)</em></p>
<p><i></i><b>Сюн Сато</b><u>Япония</u><s>J</s><em>ЮГП - 2 этап - Лэйк Плэсид (США)</em></p>
<p><i>N</i><b>Алексей Красножон</b><u>США</u><s>S</s><em>ГП - 1 этап - Лас-Вегас (США)</em></p>
<p><i></i><b>Камден Пулкинен</b><u>США</u><s>S</s><em>Autumn Classic International</em></p>
<p><i>N</i><b>Косиро Симада</b><u>Япония</u><s>S</s><em>ГП - 1 этап - Лас-Вегас (США)</em></p>
<p><i>N</i><b>Адам Сяо Хим Фа</b><u>Франция</u><s>S</s><em>Minsk Arena Ice Star</em></p>
</div>

<div class="G pa" style="left:359px;top:2551px;width:115px;height:836px">
<div class="h h1"><c>Сумма</c></div>
<div class="h"><c>Всего</c><c>Тех.</c><c>Ком.</c></div>
<p><c>299,09</c><c>158,59</c><c>140,50</c></p>
<p><c>279,05</c><c>144,00</c><c>136,05</c></p>
<p><c>268,31</c><c>147,56</c><c>120,75</c></p>
<p><c>262,47</c><c>128,02</c><c>134,45</c></p>
<p><c>256,02</c><c>130,47</c><c>126,55</c></p>
<p><c>255,32</c><c>130,12</c><c>126,20</c></p>
<p><c>255,23</c><c>124,55</c><c>131,68</c></p>
<p><c>255,09</c><c>120,17</c><c>134,92</c></p>
<p><c>253,55</c><c>128,52</c><c>125,03</c></p>
<p><c>250,51</c><c>137,39</c><c>114,12</c></p>
<p><c>249,96</c><c>129,61</c><c>121,35</c></p>
<p><c>249,62</c><c>128,37</c><c>122,25</c></p>
<p><c>245,35</c><c>130,61</c><c>114,74</c></p>
<p><c>243,82</c><c>133,27</c><c>110,55</c></p>
<p><c>241,53</c><c>130,50</c><c>111,03</c></p>
<p><c>240,11</c><c>123,41</c><c>118,70</c></p>
<p><c>239,34</c><c>113,30</c><c>126,04</c></p>
<p><c>236,44</c><c>126,05</c><c>110,39</c></p>
<p><c>234,87</c><c>122,62</c><c>112,25</c></p>
<p><c>232,70</c><c>113,85</c><c>119,85</c></p>
<p><c>232,39</c><c>122,59</c><c>110,80</c></p>
<p><c>231,95</c><c>112,60</c><c>120,35</c></p>
<p><c>230,44</c><c>112,89</c><c>117,55</c></p>
<p><c>230,11</c><c>113,61</c><c>116,50</c></p>
<p><c>229,97</c><c>109,57</c><c>122,40</c></p>
<p><c>229,72</c><c>117,92</c><c>112,80</c></p>
<p><c>228,64</c><c>121,87</c><c>106,77</c></p>
<p><c>227,38</c><c>111,18</c><c>117,20</c></p>
<p><c>224,98</c><c>113,52</c><c>114,46</c></p>
<p><c>223,82</c><c>113,51</c><c>110,31</c></p>
<p><c>223,72</c><c>114,43</c><c>109,29</c></p>
<p><c>223,24</c><c>113,64</c><c>115,60</c></p>
<p><c>222,23</c><c>108,18</c><c>116,05</c></p>
<p><c>222,14</c><c>114,24</c><c>107,90</c></p>
<p><c>222,07</c><c>116,77</c><c>105,30</c></p>
<p><c>221,93</c><c>111,84</c><c>110,09</c></p>
<p><c>221,44</c><c>115,57</c><c>105,87</c></p>
<p><c>220,96</c><c>108,71</c><c>112,25</c></p>
<p><c>220,51</c><c>122,26</c><c>99,25</c></p>
<p><c>219,70</c><c>106,12</c><c>114,58</c></p>
<p><c>219,69</c><c>112,97</c><c>106,72</c></p>
<p><c>219,67</c><c>106,81</c><c>114,86</c></p>
<p><c>219,39</c><c>119,64</c><c>100,75</c></p>
<p><c>218,45</c><c>101,10</c><c>119,35</c></p>
<p><c>218,31</c><c>112,06</c><c>106,25</c></p>
<p><c>217,12</c><c>112,94</c><c>105,18</c></p>
<p><c>216,59</c><c>111,72</c><c>106,87</c></p>
<p><c>216,25</c><c>103,50</c><c>113,75</c></p>
<p><c>216,22</c><c>110,57</c><c>106,65</c></p>
<p><c>215,57</c><c>113,37</c><c>103,20</c></p>
</div>

<div class="G pb" style="left:478px;top:2551px;width:119px;height:836px">
<div class="h h1"><c>Короткая программа</c></div>
<div class="h"><c>Всего</c><c>Тех.</c><c>Ком.</c><c>Ш.</c></div>
<p><c>102,71</c><c>56,21</c><c>46,50</c><c>-</c></p>
<p><c>98,38</c><c>53,03</c><c>46,35</c><c>1</c></p>
<p><c>101,09</c><c>60,44</c><c>40,65</c><c>-</c></p>
<p><c>94,76</c><c>50,11</c><c>44,65</c><c>-</c></p>
<p><c>89,57</c><c>46,22</c><c>43,35</c><c>-</c></p>
<p><c>101,49</c><c>58,19</c><c>43,30</c><c>-</c></p>
<p><c>92,28</c><c>47,60</c><c>44,68</c><c>-</c></p>
<p><c>83,45</c><c>39,23</c><c>44,22</c><c>-</c></p>
<p><c>96,57</c><c>54,54</c><c>42,03</c><c>-</c></p>
<p><c>87,33</c><c>49,55</c><c>37,78</c><c>-</c></p>
<p><c>88,76</c><c>47,91</c><c>40,85</c><c>-</c></p>
<p><c>81,18</c><c>42,03</c><c>40,15</c><c>1</c></p>
<p><c>84,72</c><c>46,82</c><c>37,90</c><c>-</c></p>
<p><c>85,42</c><c>49,27</c><c>36,15</c><c>-</c></p>
<p><c>82,77</c><c>46,10</c><c>36,67</c><c>-</c></p>
<p><c>82,88</c><c>42,08</c><c>40,80</c><c>-</c></p>
<p><c>96,34</c><c>51,66</c><c>44,68</c><c>-</c></p>
<p><c>78,85</c><c>43,46</c><c>35,39</c><c>-</c></p>
<p><c>80,61</c><c>43,94</c><c>36,67</c><c>-</c></p>
<p><c>75,87</c><c>37,72</c><c>39,15</c><c>1</c></p>
<p><c>80,99</c><c>44,55</c><c>36,44</c><c>-</c></p>
<p><c>89,03</c><c>48,78</c><c>40,25</c><c>-</c></p>
<p><c>84,23</c><c>44,58</c><c>39,65</c><c>-</c></p>
<p><c>76,92</c><c>38,92</c><c>38,00</c><c>-</c></p>
<p><c>79,76</c><c>39,86</c><c>40,90</c><c>1</c></p>
<p><c>75,01</c><c>37,83</c><c>37,18</c><c>-</c></p>
<p><c>81,01</c><c>44,94</c><c>36,07</c><c>-</c></p>
<p><c>71,76</c><c>35,36</c><c>37,40</c><c>1</c></p>
<p><c>74,56</c><c>36,32</c><c>39,24</c><c>1</c></p>
<p><c>82,11</c><c>44,94</c><c>37,17</c><c>-</c></p>
<p><c>78,42</c><c>43,05</c><c>35,37</c><c>-</c></p>
<p><c>92,81</c><c>51,89</c><c>40,92</c><c>-</c></p>
<p><c>86,34</c><c>47,13</c><c>39,21</c><c>-</c></p>
<p><c>74,15</c><c>38,69</c><c>35,46</c><c>-</c></p>
<p><c>74,92</c><c>41,32</c><c>33,60</c><c>-</c></p>
<p><c>83,31</c><c>46,10</c><c>37,21</c><c>-</c></p>
<p><c>75,26</c><c>41,87</c><c>33,39</c><c>-</c></p>
<p><c>74,15</c><c>37,20</c><c>36,95</c><c>-</c></p>
<p><c>65,28</c><c>34,53</c><c>31,75</c><c>1</c></p>
<p><c>79,76</c><c>41,62</c><c>38,14</c><c>-</c></p>
<p><c>78,41</c><c>42,19</c><c>36,22</c><c>-</c></p>
<p><c>78,98</c><c>39,20</c><c>39,78</c><c>-</c></p>
<p><c>74,83</c><c>41,58</c><c>34,25</c><c>1</c></p>
<p><c>79,56</c><c>39,41</c><c>41,15</c><c>1</c></p>
<p><c>77,30</c><c>42,27</c><c>35,03</c><c>-</c></p>
<p><c>79,19</c><c>44,03</c><c>35,16</c><c>-</c></p>
<p><c>72,30</c><c>37,95</c><c>35,35</c><c>1</c></p>
<p><c>81,34</c><c>41,99</c><c>39,35</c><c>-</c></p>
<p><c>72,12</c><c>35,83</c><c>36,29</c><c>-</c></p>
<p><c>66,48</c><c>33,88</c><c>32,60</c><c>-</c></p>
</div>

<div class="G pc" style="left:602px;top:2551px;width:123px;height:836px">
<div class="h h1"><c>Произвольная программа</c></div>
<div class="h"><c>Всего</c><c>Тех.</c><c>Ком.</c><c>Ш.</c></div>
<p><c>196,38</c><c>102,38</c><c>94,00</c><c>-</c></p>
<p><c>180,67</c><c>90,97</c><c>89,70</c><c>-</c></p>
<p><c>167,22</c><c>87,12</c><c>80,10</c><c>-</c></p>
<p><c>167,71</c><c>77,91</c><c>89,80</c><c>-</c></p>
<p><c>166,45</c><c>84,25</c><c>83,20</c><c>1</c></p>
<p><c>153,83</c><c>71,93</c><c>82,90</c><c>1</c></p>
<p><c>162,95</c><c>76,95</c><c>87,00</c><c>1</c></p>
<p><c>171,64</c><c>80,94</c><c>90,70</c><c>-</c></p>
<p><c>156,98</c><c>73,98</c><c>83,00</c><c>-</c></p>
<p><c>163,18</c><c>87,84</c><c>76,34</c><c>1</c></p>
<p><c>161,20</c><c>81,70</c><c>80,50</c><c>1</c></p>
<p><c>168,44</c><c>86,34</c><c>82,10</c><c>-</c></p>
<p><c>160,63</c><c>83,79</c><c>76,84</c><c>-</c></p>
<p><c>158,40</c><c>84,00</c><c>74,40</c><c>-</c></p>
<p><c>158,76</c><c>84,40</c><c>74,36</c><c>-</c></p>
<p><c>157,23</c><c>81,33</c><c>77,90</c><c>2</c></p>
<p><c>143,00</c><c>61,64</c><c>81,36</c><c>-</c></p>
<p><c>157,59</c><c>82,59</c><c>75,00</c><c>-</c></p>
<p><c>154,26</c><c>78,68</c><c>75,58</c><c>-</c></p>
<p><c>156,83</c><c>76,13</c><c>80,70</c><c>-</c></p>
<p><c>151,40</c><c>78,04</c><c>74,36</c><c>1</c></p>
<p><c>142,92</c><c>63,82</c><c>80,10</c><c>1</c></p>
<p><c>146,21</c><c>68,31</c><c>77,90</c><c>-</c></p>
<p><c>153,19</c><c>74,69</c><c>78,50</c><c>-</c></p>
<p><c>150,21</c><c>69,71</c><c>81,50</c><c>1</c></p>
<p><c>154,71</c><c>80,09</c><c>75,62</c><c>1</c></p>
<p><c>147,63</c><c>76,93</c><c>70,70</c><c>-</c></p>
<p><c>155,62</c><c>75,82</c><c>79,80</c><c>-</c></p>
<p><c>150,42</c><c>77,20</c><c>75,22</c><c>2</c></p>
<p><c>141,71</c><c>68,57</c><c>73,14</c><c>-</c></p>
<p><c>145,30</c><c>71,38</c><c>73,92</c><c>-</c></p>
<p><c>130,43</c><c>61,75</c><c>74,68</c><c>6</c></p>
<p><c>135,89</c><c>61,05</c><c>76,84</c><c>2</c></p>
<p><c>147,99</c><c>75,55</c><c>72,44</c><c>-</c></p>
<p><c>147,15</c><c>75,45</c><c>71,70</c><c>-</c></p>
<p><c>138,62</c><c>65,74</c><c>72,88</c><c>-</c></p>
<p><c>146,18</c><c>73,70</c><c>72,48</c><c>-</c></p>
<p><c>146,81</c><c>71,51</c><c>75,30</c><c>-</c></p>
<p><c>155,23</c><c>87,73</c><c>67,50</c><c>-</c></p>
<p><c>139,94</c><c>64,50</c><c>76,44</c><c>1</c></p>
<p><c>141,28</c><c>70,78</c><c>70,50</c><c>-</c></p>
<p><c>140,69</c><c>67,61</c><c>75,08</c><c>2</c></p>
<p><c>144,56</c><c>78,06</c><c>66,50</c><c>-</c></p>
<p><c>138,89</c><c>61,69</c><c>78,20</c><c>1</c></p>
<p><c>141,01</c><c>69,79</c><c>71,22</c><c>-</c></p>
<p><c>137,93</c><c>68,91</c><c>70,02</c><c>1</c></p>
<p><c>144,29</c><c>73,77</c><c>71,52</c><c>1</c></p>
<p><c>134,91</c><c>61,51</c><c>74,40</c><c>1</c></p>
<p><c>144,10</c><c>74,74</c><c>70,36</c><c>1</c></p>
<p><c>149,09</c><c>79,49</c><c>70,60</c><c>1</c></p>
</div>

<div class="bx" style="left:396px;top:3414px;width:296px;height:20px">Техника (&gt;110)</div>

<div class="L T" style="left:34px;top:3466px">
<p><i>N</i><b>Нейтан Чен</b><u>США</u><s>S</s><em>ГП - 1 этап - Лас-Вегас (США)</em></p>
<p><i></i><b>Цзинь Боян</b><u>Китай</u><s>S</s><em>Lombardia Trophy</em></p>
<p><i></i><b>Юдзуру Ханю</b><u>Япония</u><s>S</s><em>Autumn Classic International</em></p>
<p class="g"><i></i><b>Даниил Самсонов</b><u>Россия</u><s>J</s><em>ЮГП - 5 этап - Гданьск (Польша)</em></p>
<p><i>N</i><b>Даниэль Грассль</b><u>Италия</u><s>S</s><em>Minsk Arena Ice Star</em></p>
<p><i></i><b>Юма Кагияма</b><u>Япония</u><s>J</s><em>ЮГП - 5 этап - Гданьск (Польша)</em></p>
<p><i></i><b>Даниэль Грассль</b><u>Италия</u><s>J</s><em>ЮГП - 7 этап - Энья (Италия)</em></p>
<p><i></i><b>Киган Мессинг</b><u>Канада</u><s>S</s><em>Autumn Classic International</em></p>
<p class="g"><i></i><b>Дмитрий Алиев</b><u>Россия</u><s>S</s><em>27th Nepela Memorial</em></p>
<p><i></i><b>Кэйдзи Танака</b><u>Япония</u><s>S</s><em>U.S. International Figure Skating Classic</em></p>
<p class="g"><i>N</i><b>Дмитрий Алиев</b><u>Россия</u><s>S</s><em>ГП - 1 этап - Лас-Вегас (США)</em></p>
<p class="g"><i></i><b>Дмитрий Алиев</b><u>Россия</u><s>S</s><em>Lombardia Trophy</em></p>
<p><i></i><b>Кевин Эмоз</b><u>Франция</u><s>S</s><em>Autumn Classic International</em></p>
<p class="g"><i></i><b>Андрей Мозалёв</b><u>Россия</u><s>J</s><em>ЮГП - 6 этап - Загреб (Хорватия)</em></p>
<p><i></i><b>Сёма Уно</b><u>Япония</u><s>S</s><em>Finlandia Trophy</em></p>
<p><i></i><b>Конрад Орзел</b><u>Канада</u><s>S</s><em>Autumn Classic International</em></p>
<p><i></i><b>Сота Ямамото</b><u>Япония</u><s>S</s><em>U.S. International Figure Skating Classic</em></p>
<p><i></i><b>Юма Кагияма</b><u>Япония</u><s>J</s><em>ЮГП - 1 этап - Куршевель (Франция)</em></p>
<p class="g"><i></i><b>Пётр Гуменник</b><u>Россия</u><s>J</s><em>ЮГП - 7 этап - Энья (Италия)</em></p>
<p class="g"><i></i><b>Макар Игнатов</b><u>Россия</u><s>S</s><em>Nebelhorn Trophy</em></p>
<p><i></i><b>Даниэль Грассль</b><u>Италия</u><s>J</s><em>ЮГП - 5 этап - Гданьск (Польша)</em></p>
<p><i>N</i><b>Джейсон Браун</b><u>США</u><s>S</s><em>ГП - 1 этап - Лас-Вегас (США)</em></p>
<p class="g"><i></i><b>Егор Мурашов</b><u>Россия</u><s>S</s><em>Lombardia Trophy</em></p>
<p><i>N</i><b>Кадзуки Томоно</b><u>Япония</u><s>S</s><em>ГП - 1 этап - Лас-Вегас (США)</em></p>
<p class="g"><i>N</i><b>Артём Ковалёв</b><u>Россия</u><s>S</s><em>Minsk Arena Ice Star</em></p>
<p><i></i><b>Иван Шмуратко</b><u>Украина</u><s>J</s><em>ЮГП - 7 этап - Энья (Италия)</em></p>
<p class="g"><i></i><b>Андрей Мозалёв</b><u>Россия</u><s>J</s><em>ЮГП - 3 этап - Рига (Латвия)</em></p>
<p class="g"><i></i><b>Пётр Гуменник</b><u>Россия</u><s>J</s><em>ЮГП - 4 этап - Челябинск (Россия)</em></p>
<p><i></i><b>Маттео Риццо</b><u>Италия</u><s>S</s><em>27th Nepela Memorial</em></p>
<p><i></i><b>Сота Ямамото</b><u>Япония</u><s>S</s><em>Finlandia Trophy</em></p>
<p class="g"><i></i><b>Глеб Лутфуллин</b><u>Россия</u><s>J</s><em>ЮГП - 5 этап - Гданьск (Польша)</em></p>
<p><i></i><b>Алексей Красножон</b><u>США</u><s>S</s><em>U.S. International Figure Skating Classic</em></p>
<p><i>N</i><b>Цзинь Боян</b><u>Китай</u><s>S</s><em>ГП - 1 этап - Лас-Вегас (США)</em></p>
<p class="g"><i></i><b>Артур Даниелян</b><u>Россия</u><s>J</s><em>ЮГП - 6 этап - Загреб (Хорватия)</em></p>
<p><i>N</i><b>Адам Сяо Хим Фа</b><u>Франция</u><s>S</s><em>Minsk Arena Ice Star</em></p>
<p><i>N</i><b>Киган Мессинг</b><u>Канада</u><s>S</s><em>ГП - 1 этап - Лас-Вегас (США)</em></p>
<p><i></i><b>Сюн Сато</b><u>Япония</u><s>J</s><em>ЮГП - 6 этап - Загреб (Хорватия)</em></p>
<p><i></i><b>Сюн Сато</b><u>Япония</u><s>J</s><em>ЮГП - 2 этап - Лэйк Плэсид (США)</em></p>
<p><i></i><b>Чха Чжун Хван</b><u>Корея</u><s>S</s><em>Autumn Classic International</em></p>
<p><i></i><b>Винсент Чжоу</b><u>США</u><s>S</s><em>U.S. International Figure Skating Classic</em></p>
<p><i></i><b>Ли Си Хён</b><u>Корея</u><s>J</s><em>ЮГП - 3 этап - Рига (Латвия)</em></p>
<p class="g"><i></i><b>Артур Даниелян</b><u>Россия</u><s>J</s><em>ЮГП - 4 этап - Челябинск (Россия)</em></p>
<p><i>N</i><b>Алексей Красножон</b><u>США</u><s>S</s><em>ГП - 1 этап - Лас-Вегас (США)</em></p>
<p><i></i><b>Маттео Риццо</b><u>Италия</u><s>S</s><em>Lombardia Trophy</em></p>
<p><i></i><b>Джимми Ма</b><u>США</u><s>S</s><em>Finlandia Trophy</em></p>
<p><i>N</i><b>Косиро Симада</b><u>Япония</u><s>S</s><em>ГП - 1 этап - Лас-Вегас (США)</em></p>
</div>

<div class="G ta" style="left:396px;top:3432px;width:40px;height:772px">
<div class="h" style="height:34px;line-height:32px"><c>Сумма</c></div>
<p><c>158,59</c></p><p><c>147,56</c></p><p><c>144,00</c></p><p><c>137,39</c></p><p><c>133,27</c></p><p><c>130,61</c></p><p><c>130,50</c></p><p><c>130,47</c></p><p><c>130,12</c></p><p><c>129,61</c></p><p><c>128,52</c></p><p><c>128,37</c></p><p><c>128,02</c></p><p><c>126,05</c></p><p><c>124,55</c></p><p><c>123,78</c></p><p><c>123,41</c></p><p><c>122,62</c></p><p><c>122,59</c></p><p><c>122,26</c></p><p><c>121,87</c></p><p><c>120,17</c></p><p><c>119,64</c></p><p><c>117,92</c></p><p><c>116,77</c></p><p><c>115,57</c></p><p><c>114,43</c></p><p><c>114,24</c></p><p><c>113,85</c></p><p><c>113,64</c></p><p><c>113,63</c></p><p><c>113,61</c></p><p><c>113,52</c></p><p><c>113,51</c></p><p><c>113,37</c></p><p><c>113,30</c></p><p><c>112,97</c></p><p><c>112,94</c></p><p><c>112,89</c></p><p><c>112,60</c></p><p><c>112,06</c></p><p><c>111,84</c></p><p><c>111,72</c></p><p><c>111,18</c></p><p><c>111,01</c></p><p><c>110,57</c></p>
</div>

<div class="G tb" style="left:443px;top:3432px;width:121px;height:772px">
<div class="h h1"><c>Короткая программа</c></div>
<div class="h"><c>Всего</c><c>База</c><c>GOE</c></div>
<p><c>56,21</c><c>46,60</c><c>9,61</c></p>
<p><c>60,44</c><c>47,60</c><c>12,84</c></p>
<p><c>53,03</c><c>44,43</c><c>8,60</c></p>
<p><c>49,55</c><c>37,61</c><c>11,94</c></p>
<p><c>49,27</c><c>43,61</c><c>5,66</c></p>
<p><c>46,82</c><c>37,01</c><c>9,81</c></p>
<p><c>46,10</c><c>37,61</c><c>8,49</c></p>
<p><c>46,22</c><c>40,79</c><c>5,43</c></p>
<p><c>58,19</c><c>47,20</c><c>10,99</c></p>
<p><c>47,91</c><c>41,81</c><c>6,10</c></p>
<p><c>54,54</c><c>46,35</c><c>8,19</c></p>
<p><c>42,03</c><c>44,30</c><c>-2,27</c></p>
<p><c>50,11</c><c>42,00</c><c>8,11</c></p>
<p><c>43,46</c><c>36,51</c><c>6,95</c></p>
<p><c>47,60</c><c>42,03</c><c>5,57</c></p>
<p><c>44,34</c><c>44,30</c><c>0,04</c></p>
<p><c>42,08</c><c>34,60</c><c>7,48</c></p>
<p><c>43,94</c><c>36,61</c><c>7,33</c></p>
<p><c>44,55</c><c>37,21</c><c>7,34</c></p>
<p><c>34,53</c><c>36,56</c><c>-2,03</c></p>
<p><c>44,94</c><c>37,01</c><c>7,93</c></p>
<p><c>39,23</c><c>30,01</c><c>9,22</c></p>
<p><c>41,58</c><c>42,00</c><c>-0,42</c></p>
<p><c>37,83</c><c>40,35</c><c>-2,52</c></p>
<p><c>41,32</c><c>37,41</c><c>3,91</c></p>
<p><c>41,87</c><c>36,49</c><c>5,38</c></p>
<p><c>43,05</c><c>36,51</c><c>6,54</c></p>
<p><c>38,69</c><c>34,02</c><c>4,67</c></p>
<p><c>37,72</c><c>39,91</c><c>-2,19</c></p>
<p><c>51,89</c><c>41,90</c><c>9,99</c></p>
<p><c>42,05</c><c>35,60</c><c>6,45</c></p>
<p><c>38,92</c><c>39,92</c><c>-1,00</c></p>
<p><c>36,32</c><c>33,94</c><c>2,38</c></p>
<p><c>44,94</c><c>37,01</c><c>7,93</c></p>
<p><c>33,88</c><c>32,10</c><c>1,78</c></p>
<p><c>51,66</c><c>40,79</c><c>10,87</c></p>
<p><c>42,19</c><c>35,69</c><c>6,50</c></p>
<p><c>44,03</c><c>36,09</c><c>7,94</c></p>
<p><c>44,58</c><c>43,36</c><c>1,22</c></p>
<p><c>48,78</c><c>43,80</c><c>4,98</c></p>
<p><c>42,27</c><c>37,01</c><c>5,26</c></p>
<p><c>46,10</c><c>37,61</c><c>8,49</c></p>
<p><c>37,95</c><c>35,92</c><c>2,03</c></p>
<p><c>35,36</c><c>37,10</c><c>-1,74</c></p>
<p><c>33,02</c><c>35,41</c><c>-2,39</c></p>
<p><c>35,83</c><c>31,01</c><c>4,82</c></p>
</div>

<div class="G tc" style="left:571px;top:3432px;width:121px;height:772px">
<div class="h h1"><c>Произвольная программа</c></div>
<div class="h"><c>Всего</c><c>База</c><c>GOE</c></div>
<p><c>102,38</c><c>78,86</c><c>23,52</c></p>
<p><c>87,12</c><c>77,55</c><c>9,57</c></p>
<p><c>90,97</c><c>86,97</c><c>4,00</c></p>
<p><c>87,84</c><c>76,28</c><c>11,56</c></p>
<p><c>84,00</c><c>76,21</c><c>7,79</c></p>
<p><c>83,79</c><c>69,51</c><c>14,28</c></p>
<p><c>84,40</c><c>81,05</c><c>3,35</c></p>
<p><c>84,25</c><c>80,33</c><c>3,92</c></p>
<p><c>71,93</c><c>71,77</c><c>0,16</c></p>
<p><c>81,70</c><c>79,55</c><c>2,15</c></p>
<p><c>73,98</c><c>64,27</c><c>9,71</c></p>
<p><c>86,34</c><c>77,25</c><c>9,09</c></p>
<p><c>77,91</c><c>76,68</c><c>1,23</c></p>
<p><c>82,59</c><c>76,30</c><c>6,29</c></p>
<p><c>76,95</c><c>71,90</c><c>5,05</c></p>
<p><c>79,44</c><c>78,83</c><c>0,61</c></p>
<p><c>81,33</c><c>80,36</c><c>0,97</c></p>
<p><c>78,68</c><c>69,43</c><c>9,25</c></p>
<p><c>78,04</c><c>74,10</c><c>3,94</c></p>
<p><c>87,73</c><c>76,50</c><c>11,23</c></p>
<p><c>76,93</c><c>77,35</c><c>-0,42</c></p>
<p><c>80,94</c><c>66,11</c><c>14,83</c></p>
<p><c>78,06</c><c>76,92</c><c>1,14</c></p>
<p><c>80,09</c><c>80,00</c><c>0,09</c></p>
<p><c>75,45</c><c>68,10</c><c>7,35</c></p>
<p><c>73,70</c><c>65,92</c><c>7,78</c></p>
<p><c>71,38</c><c>72,46</c><c>-1,08</c></p>
<p><c>75,55</c><c>76,12</c><c>-0,57</c></p>
<p><c>76,13</c><c>70,86</c><c>5,27</c></p>
<p><c>61,75</c><c>70,86</c><c>-9,11</c></p>
<p><c>71,58</c><c>70,60</c><c>0,98</c></p>
<p><c>74,69</c><c>68,54</c><c>6,15</c></p>
<p><c>77,20</c><c>82,36</c><c>-5,16</c></p>
<p><c>68,57</c><c>63,62</c><c>4,95</c></p>
<p><c>79,49</c><c>73,80</c><c>5,69</c></p>
<p><c>61,64</c><c>57,13</c><c>4,51</c></p>
<p><c>70,78</c><c>70,49</c><c>0,29</c></p>
<p><c>68,91</c><c>74,06</c><c>-5,15</c></p>
<p><c>68,31</c><c>68,99</c><c>-0,68</c></p>
<p><c>63,82</c><c>69,29</c><c>-5,47</c></p>
<p><c>69,79</c><c>63,87</c><c>5,92</c></p>
<p><c>65,74</c><c>60,82</c><c>4,92</c></p>
<p><c>73,77</c><c>69,10</c><c>4,67</c></p>
<p><c>75,82</c><c>70,75</c><c>5,07</c></p>
<p><c>77,99</c><c>71,93</c><c>6,06</c></p>
<p><c>74,74</c><c>71,42</c><c>3,32</c></p>
</div>

<div class="bx" style="left:347px;top:4235px;width:378px;height:20px">Компоненты (&gt;110)</div>

<div class="L C" style="left:0;top:4287px">
<p><i>N</i><b>Нейтан Чен</b><u>США</u><s>S</s><em>ГП - 1 этап - Лас-Вегас (США)</em></p>
<p><i></i><b>Юдзуру Ханю</b><u>Япония</u><s>S</s><em>Autumn Classic International</em></p>
<p><i>N</i><b>Джейсон Браун</b><u>США</u><s>S</s><em>ГП - 1 этап - Лас-Вегас (США)</em></p>
<p><i></i><b>Кевин Эмоз</b><u>Франция</u><s>S</s><em>Autumn Classic International</em></p>
<p><i></i><b>Сёма Уно</b><u>Япония</u><s>S</s><em>Finlandia Trophy</em></p>
<p><i></i><b>Киган Мессинг</b><u>Канада</u><s>S</s><em>Autumn Classic International</em></p>
<p class="g"><i></i><b>Дмитрий Алиев</b><u>Россия</u><s>S</s><em>27th Nepela Memorial</em></p>
<p><i>N</i><b>Киган Мессинг</b><u>Канада</u><s>S</s><em>ГП - 1 этап - Лас-Вегас (США)</em></p>
<p class="g"><i>N</i><b>Дмитрий Алиев</b><u>Россия</u><s>S</s><em>ГП - 1 этап - Лас-Вегас (США)</em></p>
<p><i></i><b>Денис Васильев</b><u>Латвия</u><s>S</s><em>27th Nepela Memorial</em></p>
<p class="g"><i></i><b>Дмитрий Алиев</b><u>Россия</u><s>S</s><em>Lombardia Trophy</em></p>
<p><i></i><b>Кэйдзи Танака</b><u>Япония</u><s>S</s><em>U.S. International Figure Skating Classic</em></p>
<p><i></i><b>Цзинь Боян</b><u>Китай</u><s>S</s><em>Lombardia Trophy</em></p>
<p><i></i><b>Винсент Чжоу</b><u>США</u><s>S</s><em>U.S. International Figure Skating Classic</em></p>
<p><i></i><b>Маттео Риццо</b><u>Италия</u><s>S</s><em>27th Nepela Memorial</em></p>
<p class="g"><i></i><b>Александр Самарин</b><u>Россия</u><s>S</s><em>27th Nepela Memorial</em></p>
<p><i>N</i><b>Михал Бржезина</b><u>Чехия</u><s>S</s><em>ГП - 1 этап - Лас-Вегас (США)</em></p>
<p><i></i><b>Сота Ямамото</b><u>Япония</u><s>S</s><em>U.S. International Figure Skating Classic</em></p>
<p><i></i><b>Чха Чжун Хван</b><u>Корея</u><s>S</s><em>Autumn Classic International</em></p>
<p><i></i><b>Маттео Риццо</b><u>Италия</u><s>S</s><em>Lombardia Trophy</em></p>
<p><i></i><b>Алексей Красножон</b><u>США</u><s>S</s><em>U.S. International Figure Skating Classic</em></p>
<p><i></i><b>Роман Садовский</b><u>Канада</u><s>S</s><em>Finlandia Trophy</em></p>
<p><i></i><b>Сота Ямамото</b><u>Япония</u><s>S</s><em>Finlandia Trophy</em></p>
<p><i>N</i><b>Чха Чжун Хван</b><u>Корея</u><s>S</s><em>ГП - 1 этап - Лас-Вегас (США)</em></p>
<p><i></i><b>Юма Кагияма</b><u>Япония</u><s>J</s><em>ЮГП - 5 этап - Гданьск (Польша)</em></p>
<p><i>N</i><b>Алексей Быченко</b><u>Израиль</u><s>S</s><em>ГП - 1 этап - Лас-Вегас (США)</em></p>
<p><i>N</i><b>Цзинь Боян</b><u>Китай</u><s>S</s><em>ГП - 1 этап - Лас-Вегас (США)</em></p>
<p class="g"><i></i><b>Даниил Самсонов</b><u>Россия</u><s>J</s><em>ЮГП - 5 этап - Гданьск (Польша)</em></p>
<p><i></i><b>Даниэль Самохин</b><u>Израиль</u><s>S</s><em>Nebelhorn Trophy</em></p>
<p><i></i><b>Камден Пулкинен</b><u>США</u><s>S</s><em>Autumn Classic International</em></p>
<p><i>N</i><b>Кадзуки Томоно</b><u>Япония</u><s>S</s><em>ГП - 1 этап - Лас-Вегас (США)</em></p>
<p><i></i><b>Юма Кагияма</b><u>Япония</u><s>J</s><em>ЮГП - 1 этап - Куршевель (Франция)</em></p>
<p><i></i><b>Морис Квителашвили</b><u>Грузия</u><s>S</s><em>Lombardia Trophy</em></p>
<p><i></i><b>Мицуки Сумото</b><u>Япония</u><s>S</s><em>27th Nepela Memorial</em></p>
<p><i></i><b>Эндрю Торгашёв</b><u>США</u><s>J</s><em>ЮГП - 6 этап - Загреб (Хорватия)</em></p>
<p><i></i><b>Даниэль Грассль</b><u>Италия</u><s>J</s><em>ЮГП - 7 этап - Энья (Италия)</em></p>
<p class="g"><i></i><b>Пётр Гуменник</b><u>Россия</u><s>J</s><em>ЮГП - 7 этап - Энья (Италия)</em></p>
<p><i>N</i><b>Даниэль Грассль</b><u>Италия</u><s>S</s><em>Minsk Arena Ice Star</em></p>
<p class="g"><i></i><b>Андрей Мозалёв</b><u>Россия</u><s>J</s><em>ЮГП - 6 этап - Загреб (Хорватия)</em></p>
<p class="g"><i></i><b>Артур Даниелян</b><u>Россия</u><s>J</s><em>ЮГП - 6 этап - Загреб (Хорватия)</em></p>
<p class="g"><i></i><b>Артур Даниелян</b><u>Россия</u><s>J</s><em>ЮГП - 4 этап - Челябинск (Россия)</em></p>
<p><i></i><b>Косиро Симада</b><u>Япония</u><s>S</s><em>Nebelhorn Trophy</em></p>
</div>

<div class="G ca cm" style="left:347px;top:4253px;width:39px;height:719px">
<div class="h" style="height:34px;line-height:32px"><c>Сумма</c></div>
<p><c>140,50</c></p><p><c>136,05</c></p><p><c>134,92</c></p><p><c>134,45</c></p><p><c>131,68</c></p><p><c>126,55</c></p><p><c>126,20</c></p><p><c>126,04</c></p><p><c>125,03</c></p><p><c>122,40</c></p><p><c>122,25</c></p><p><c>121,35</c></p><p><c>120,75</c></p><p><c>120,35</c></p><p><c>119,85</c></p><p><c>119,35</c></p><p><c>118,79</c></p><p><c>118,70</c></p><p><c>117,55</c></p><p><c>117,20</c></p><p><c>116,50</c></p><p><c>116,05</c></p><p><c>115,60</c></p><p><c>114,86</c></p><p><c>114,74</c></p><p><c>114,58</c></p><p><c>114,46</c></p><p><c>114,12</c></p><p><c>114,00</c></p><p><c>113,75</c></p><p><c>112,80</c></p><p><c>112,25</c></p><p><c>112,25</c></p><p><c>111,60</c></p><p><c>111,29</c></p><p><c>111,03</c></p><p><c>110,80</c></p><p><c>110,55</c></p><p><c>110,39</c></p><p><c>110,31</c></p><p><c>110,09</c></p><p><c>110,05</c></p>
</div>

<div class="G cb cm" style="left:393px;top:4253px;width:164px;height:719px">
<div class="h h1"><c>Короткая программа</c></div>
<div class="h"><c>Всего</c><c>Sk. Sk.</c><c>Tran.</c><c>Perf.</c><c>Comp.</c><c>Int.</c></div>
<p><c>46,50</c><c>9,29</c><c>9,07</c><c>9,39</c><c>9,32</c><c>9,43</c></p>
<p><c>46,35</c><c>9,30</c><c>9,30</c><c>9,10</c><c>9,35</c><c>9,30</c></p>
<p><c>44,22</c><c>8,82</c><c>8,68</c><c>8,79</c><c>8,93</c><c>9,00</c></p>
<p><c>44,65</c><c>8,80</c><c>8,90</c><c>8,95</c><c>8,95</c><c>9,05</c></p>
<p><c>44,68</c><c>8,92</c><c>8,67</c><c>8,96</c><c>9,13</c><c>9,00</c></p>
<p><c>43,35</c><c>8,65</c><c>8,65</c><c>8,65</c><c>8,70</c><c>8,70</c></p>
<p><c>43,30</c><c>8,60</c><c>8,40</c><c>8,80</c><c>8,70</c><c>8,80</c></p>
<p><c>44,68</c><c>8,89</c><c>8,75</c><c>9,18</c><c>8,86</c><c>9,00</c></p>
<p><c>42,03</c><c>8,43</c><c>8,14</c><c>8,57</c><c>8,46</c><c>8,43</c></p>
<p><c>40,90</c><c>7,90</c><c>7,80</c><c>8,35</c><c>8,35</c><c>8,50</c></p>
<p><c>40,15</c><c>8,15</c><c>8,00</c><c>7,90</c><c>8,00</c><c>8,10</c></p>
<p><c>40,85</c><c>8,15</c><c>7,85</c><c>8,40</c><c>8,15</c><c>8,30</c></p>
<p><c>40,65</c><c>8,40</c><c>7,80</c><c>8,15</c><c>8,15</c><c>8,15</c></p>
<p><c>40,25</c><c>8,20</c><c>7,85</c><c>8,05</c><c>8,20</c><c>7,95</c></p>
<p><c>39,15</c><c>7,85</c><c>7,60</c><c>7,70</c><c>7,90</c><c>8,10</c></p>
<p><c>41,15</c><c>8,35</c><c>7,90</c><c>8,20</c><c>8,30</c><c>8,40</c></p>
<p><c>40,15</c><c>7,96</c><c>7,79</c><c>8,04</c><c>8,11</c><c>8,25</c></p>
<p><c>40,80</c><c>8,35</c><c>7,95</c><c>8,25</c><c>8,10</c><c>8,15</c></p>
<p><c>39,65</c><c>8,10</c><c>7,75</c><c>7,90</c><c>7,95</c><c>7,95</c></p>
<p><c>37,40</c><c>7,65</c><c>7,40</c><c>7,30</c><c>7,50</c><c>7,55</c></p>
<p><c>38,00</c><c>7,65</c><c>7,20</c><c>7,65</c><c>7,65</c><c>7,85</c></p>
<p><c>39,21</c><c>7,71</c><c>7,50</c><c>8,04</c><c>7,96</c><c>8,00</c></p>
<p><c>40,92</c><c>8,21</c><c>7,83</c><c>8,42</c><c>8,21</c><c>8,25</c></p>
<p><c>39,78</c><c>7,96</c><c>7,86</c><c>8,00</c><c>7,96</c><c>8,00</c></p>
<p><c>37,90</c><c>7,79</c><c>7,32</c><c>7,68</c><c>7,54</c><c>7,57</c></p>
<p><c>38,14</c><c>7,71</c><c>7,25</c><c>7,75</c><c>7,64</c><c>7,79</c></p>
<p><c>39,24</c><c>8,14</c><c>7,64</c><c>7,57</c><c>7,96</c><c>7,93</c></p>
<p><c>37,78</c><c>7,64</c><c>7,50</c><c>7,64</c><c>7,50</c><c>7,50</c></p>
<p><c>38,00</c><c>7,75</c><c>7,30</c><c>7,60</c><c>7,60</c><c>7,75</c></p>
<p><c>39,35</c><c>7,80</c><c>7,60</c><c>8,00</c><c>7,90</c><c>8,05</c></p>
<p><c>37,18</c><c>7,46</c><c>7,11</c><c>7,43</c><c>7,54</c><c>7,64</c></p>
<p><c>36,67</c><c>7,57</c><c>7,14</c><c>7,25</c><c>7,39</c><c>7,32</c></p>
<p><c>36,95</c><c>7,50</c><c>7,30</c><c>7,25</c><c>7,40</c><c>7,50</c></p>
<p><c>35,00</c><c>7,00</c><c>7,20</c><c>6,75</c><c>7,05</c><c>7,00</c></p>
<p><c>36,57</c><c>7,25</c><c>7,07</c><c>7,46</c><c>7,29</c><c>7,50</c></p>
<p><c>36,67</c><c>7,14</c><c>7,18</c><c>7,50</c><c>7,39</c><c>7,46</c></p>
<p><c>36,44</c><c>7,25</c><c>7,11</c><c>7,43</c><c>7,29</c><c>7,36</c></p>
<p><c>36,15</c><c>7,00</c><c>7,10</c><c>7,30</c><c>7,30</c><c>7,45</c></p>
<p><c>35,39</c><c>7,04</c><c>6,93</c><c>7,14</c><c>7,14</c><c>7,14</c></p>
<p><c>37,17</c><c>7,46</c><c>7,18</c><c>7,46</c><c>7,50</c><c>7,57</c></p>
<p><c>37,21</c><c>7,50</c><c>7,18</c><c>7,61</c><c>7,46</c><c>7,46</c></p>
<p><c>36,35</c><c>7,45</c><c>6,90</c><c>7,20</c><c>7,45</c><c>7,35</c></p>
</div>

<div class="G cc cm" style="left:563px;top:4253px;width:162px;height:719px">
<div class="h h1"><c>Произвольная программа</c></div>
<div class="h"><c>Всего</c><c>Sk. Sk.</c><c>Tran.</c><c>Perf.</c><c>Comp.</c><c>Int.</c></div>
<p><c>94,00</c><c>9,39</c><c>9,11</c><c>9,50</c><c>9,43</c><c>9,57</c></p>
<p><c>89,70</c><c>9,15</c><c>9,00</c><c>8,75</c><c>9,15</c><c>8,80</c></p>
<p><c>90,70</c><c>9,00</c><c>8,89</c><c>9,11</c><c>9,14</c><c>9,21</c></p>
<p><c>89,80</c><c>8,80</c><c>8,95</c><c>8,85</c><c>9,10</c><c>9,20</c></p>
<p><c>87,00</c><c>8,96</c><c>8,54</c><c>8,50</c><c>8,79</c><c>8,71</c></p>
<p><c>83,20</c><c>8,55</c><c>8,15</c><c>8,25</c><c>8,45</c><c>8,20</c></p>
<p><c>82,90</c><c>8,40</c><c>7,95</c><c>8,30</c><c>8,40</c><c>8,40</c></p>
<p><c>81,36</c><c>8,43</c><c>8,11</c><c>7,96</c><c>8,18</c><c>8,00</c></p>
<p><c>83,00</c><c>8,54</c><c>8,14</c><c>8,25</c><c>8,36</c><c>8,21</c></p>
<p><c>81,50</c><c>8,00</c><c>7,80</c><c>8,30</c><c>8,25</c><c>8,40</c></p>
<p><c>82,10</c><c>8,25</c><c>8,05</c><c>8,20</c><c>8,25</c><c>8,30</c></p>
<p><c>80,50</c><c>8,15</c><c>7,75</c><c>8,10</c><c>8,20</c><c>8,05</c></p>
<p><c>80,10</c><c>8,25</c><c>7,75</c><c>8,10</c><c>8,05</c><c>7,90</c></p>
<p><c>80,10</c><c>8,10</c><c>7,95</c><c>7,75</c><c>8,25</c><c>8,00</c></p>
<p><c>80,70</c><c>7,95</c><c>7,80</c><c>8,15</c><c>8,20</c><c>8,25</c></p>
<p><c>78,20</c><c>8,05</c><c>7,40</c><c>7,80</c><c>7,95</c><c>7,90</c></p>
<p><c>78,64</c><c>8,00</c><c>7,79</c><c>7,64</c><c>7,93</c><c>7,96</c></p>
<p><c>77,90</c><c>8,10</c><c>7,50</c><c>7,65</c><c>8,00</c><c>7,70</c></p>
<p><c>77,90</c><c>7,95</c><c>7,40</c><c>7,85</c><c>7,75</c><c>8,00</c></p>
<p><c>79,80</c><c>7,95</c><c>7,75</c><c>7,90</c><c>8,05</c><c>8,25</c></p>
<p><c>78,50</c><c>7,80</c><c>7,45</c><c>8,00</c><c>7,95</c><c>8,05</c></p>
<p><c>76,84</c><c>7,67</c><c>7,63</c><c>7,54</c><c>7,79</c><c>7,79</c></p>
<p><c>74,68</c><c>8,00</c><c>7,25</c><c>7,08</c><c>7,63</c><c>7,38</c></p>
<p><c>75,08</c><c>7,68</c><c>7,43</c><c>7,25</c><c>7,64</c><c>7,54</c></p>
<p><c>76,84</c><c>7,89</c><c>7,39</c><c>7,82</c><c>7,68</c><c>7,64</c></p>
<p><c>76,44</c><c>7,79</c><c>7,43</c><c>7,61</c><c>7,71</c><c>7,68</c></p>
<p><c>75,22</c><c>7,82</c><c>7,29</c><c>7,39</c><c>7,57</c><c>7,54</c></p>
<p><c>76,34</c><c>7,75</c><c>7,46</c><c>7,71</c><c>7,71</c><c>7,54</c></p>
<p><c>76,00</c><c>7,75</c><c>7,35</c><c>7,60</c><c>7,55</c><c>7,75</c></p>
<p><c>74,40</c><c>7,55</c><c>7,35</c><c>7,30</c><c>7,50</c><c>7,50</c></p>
<p><c>75,62</c><c>7,57</c><c>7,32</c><c>7,57</c><c>7,64</c><c>7,71</c></p>
<p><c>75,58</c><c>7,86</c><c>7,29</c><c>7,57</c><c>7,57</c><c>7,50</c></p>
<p><c>75,30</c><c>7,65</c><c>7,50</c><c>7,50</c><c>7,50</c><c>7,50</c></p>
<p><c>76,60</c><c>7,70</c><c>7,55</c><c>7,60</c><c>7,80</c><c>7,65</c></p>
<p><c>74,72</c><c>7,50</c><c>7,29</c><c>7,39</c><c>7,54</c><c>7,64</c></p>
<p><c>74,36</c><c>7,36</c><c>7,25</c><c>7,50</c><c>7,46</c><c>7,61</c></p>
<p><c>74,36</c><c>7,50</c><c>7,21</c><c>7,61</c><c>7,43</c><c>7,43</c></p>
<p><c>74,40</c><c>7,35</c><c>7,15</c><c>7,55</c><c>7,50</c><c>7,65</c></p>
<p><c>75,00</c><c>7,46</c><c>7,43</c><c>7,61</c><c>7,57</c><c>7,43</c></p>
<p><c>73,14</c><c>7,43</c><c>7,07</c><c>7,21</c><c>7,43</c><c>7,43</c></p>
<p><c>72,88</c><c>7,54</c><c>7,00</c><c>7,29</c><c>7,36</c><c>7,25</c></p>
<p><c>73,70</c><c>7,45</c><c>7,00</c><c>7,35</c><c>7,55</c><c>7,50</c></p>
</div>

</body></html>
